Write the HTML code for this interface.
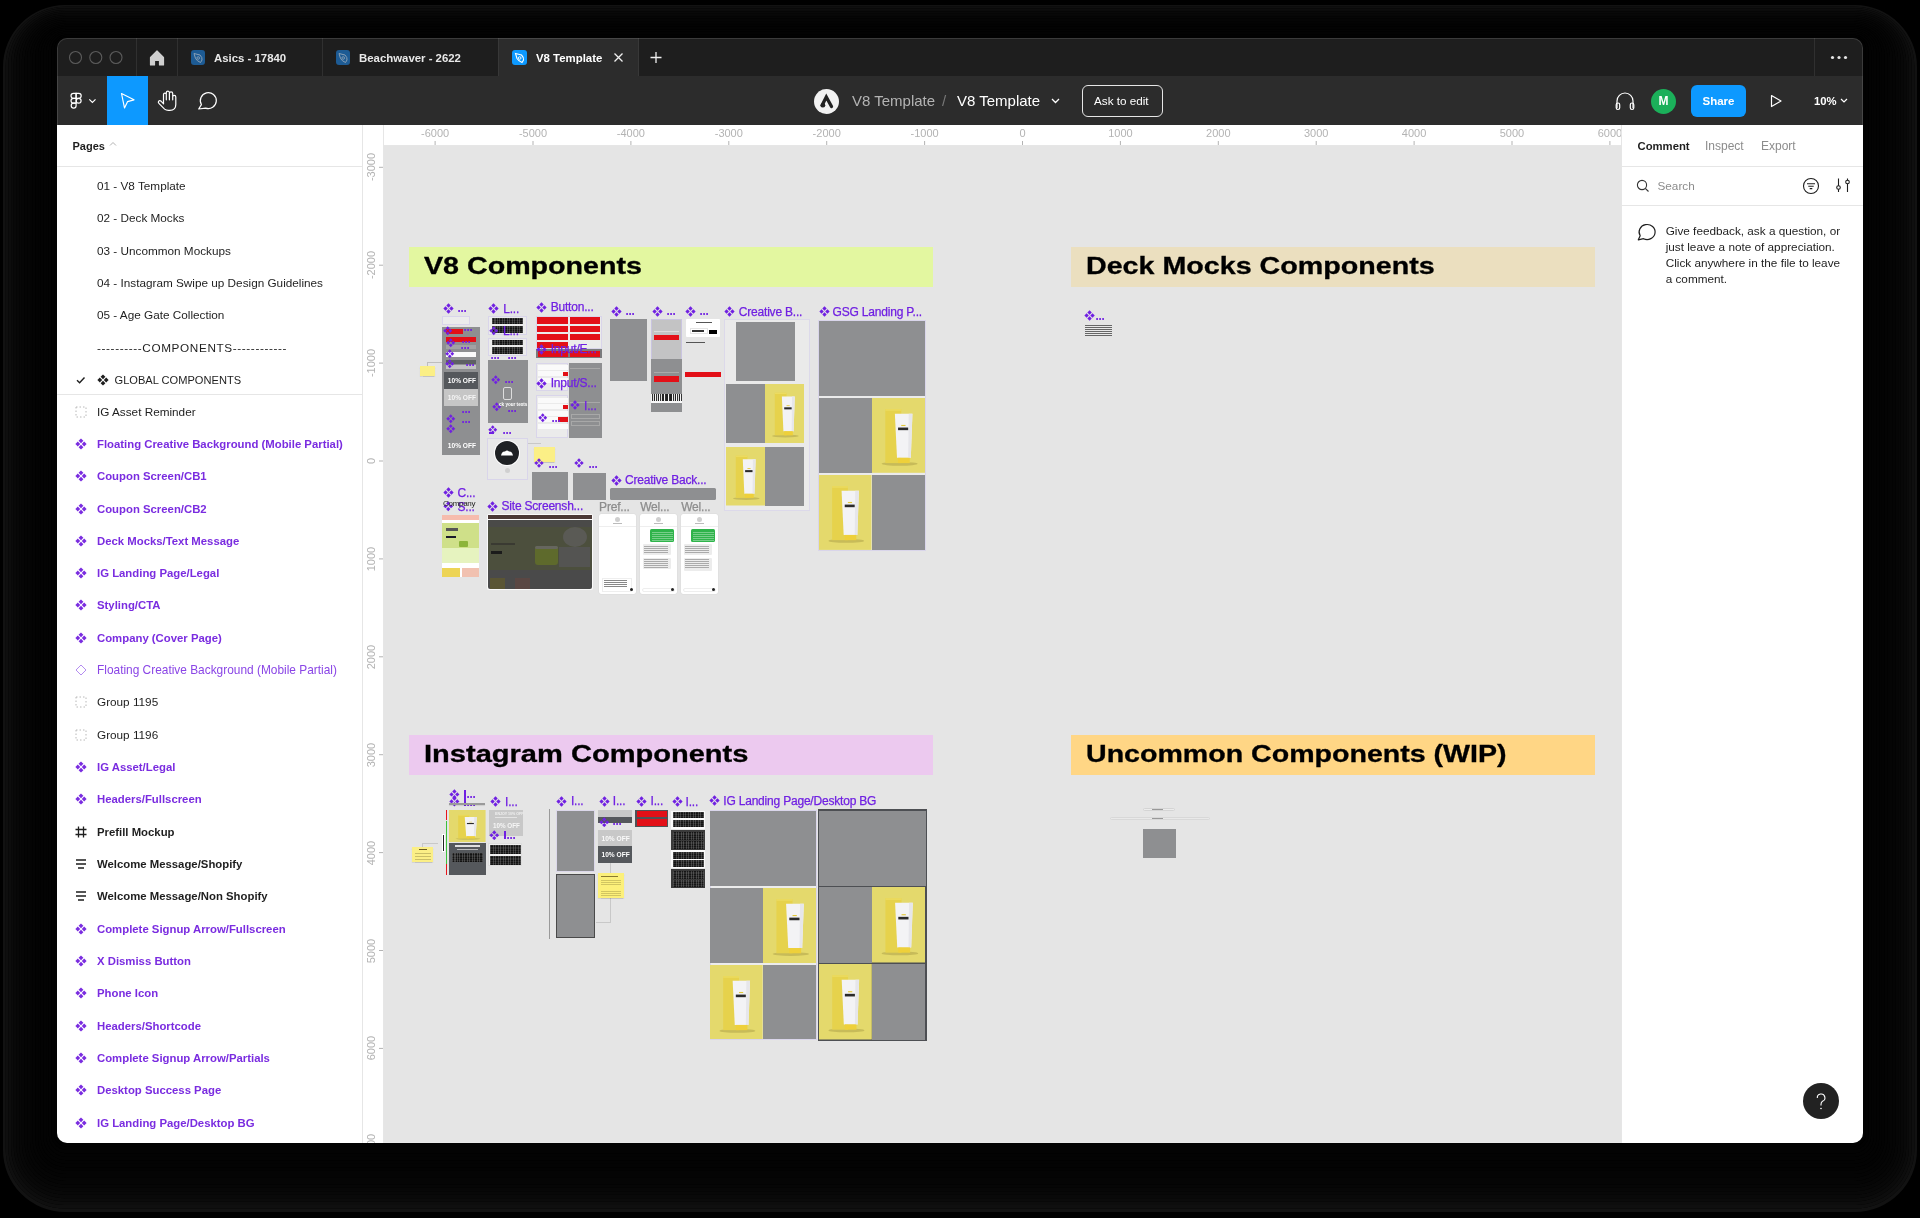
<!DOCTYPE html>
<html><head><meta charset="utf-8">
<style>
*{margin:0;padding:0;box-sizing:border-box}
html,body{width:1920px;height:1218px;overflow:hidden;background:#000;font-family:"Liberation Sans",sans-serif}
.a{position:absolute}
#win{position:absolute;left:0;top:0;width:1920px;height:1218px;clip-path:inset(38px 57px 75px 57px round 10px);will-change:transform}
.tt{position:absolute;color:#fff;font-size:12px;white-space:nowrap;line-height:14px}
.pg{position:absolute;left:97px;font-size:12px;color:#1e1e1e;white-space:nowrap;line-height:14px}
.ly{position:absolute;left:97px;font-size:11.35px;color:#7a2ce0;font-weight:bold;white-space:nowrap;line-height:14px}
.rl{position:absolute;font-size:10px;color:#b3b3b3;white-space:nowrap;line-height:12px}
</style></head>
<body>
<!-- SHADOW --><svg class="a" style="left:0;top:0" width="1920" height="1218"><path fill-rule="evenodd" fill="rgb(18,18,18)" d="M65.0 5.0 H1855.0 A62.0 62.0 0 0 1 1917.0 67.0 V1150.0 A62.0 62.0 0 0 1 1855.0 1212.0 H65.0 A62.0 62.0 0 0 1 3.0 1150.0 V67.0 A62.0 62.0 0 0 1 65.0 5.0 Z M65.1 6.7 H1854.9 A59.4 59.4 0 0 1 1914.3 66.0 V1149.1 A59.4 59.4 0 0 1 1854.9 1208.5 H65.1 A59.4 59.4 0 0 1 5.7 1149.1 V66.0 A59.4 59.4 0 0 1 65.1 6.7 Z"/><path fill-rule="evenodd" fill="rgb(15,15,15)" d="M65.1 6.7 H1854.9 A59.4 59.4 0 0 1 1914.3 66.0 V1149.1 A59.4 59.4 0 0 1 1854.9 1208.5 H65.1 A59.4 59.4 0 0 1 5.7 1149.1 V66.0 A59.4 59.4 0 0 1 65.1 6.7 Z M65.2 8.3 H1854.8 A56.8 56.8 0 0 1 1911.6 65.1 V1148.3 A56.8 56.8 0 0 1 1854.8 1205.1 H65.2 A56.8 56.8 0 0 1 8.4 1148.3 V65.1 A56.8 56.8 0 0 1 65.2 8.3 Z"/><path fill-rule="evenodd" fill="rgb(13,13,13)" d="M65.2 8.3 H1854.8 A56.8 56.8 0 0 1 1911.6 65.1 V1148.3 A56.8 56.8 0 0 1 1854.8 1205.1 H65.2 A56.8 56.8 0 0 1 8.4 1148.3 V65.1 A56.8 56.8 0 0 1 65.2 8.3 Z M65.3 9.9 H1854.7 A54.2 54.2 0 0 1 1908.9 64.2 V1147.5 A54.2 54.2 0 0 1 1854.7 1201.7 H65.3 A54.2 54.2 0 0 1 11.1 1147.5 V64.2 A54.2 54.2 0 0 1 65.3 9.9 Z"/><path fill-rule="evenodd" fill="rgb(11,11,11)" d="M65.3 9.9 H1854.7 A54.2 54.2 0 0 1 1908.9 64.2 V1147.5 A54.2 54.2 0 0 1 1854.7 1201.7 H65.3 A54.2 54.2 0 0 1 11.1 1147.5 V64.2 A54.2 54.2 0 0 1 65.3 9.9 Z M65.4 11.6 H1854.6 A51.6 51.6 0 0 1 1906.2 63.2 V1146.6 A51.6 51.6 0 0 1 1854.6 1198.2 H65.4 A51.6 51.6 0 0 1 13.8 1146.6 V63.2 A51.6 51.6 0 0 1 65.4 11.6 Z"/><path fill-rule="evenodd" fill="rgb(9,9,9)" d="M65.4 11.6 H1854.6 A51.6 51.6 0 0 1 1906.2 63.2 V1146.6 A51.6 51.6 0 0 1 1854.6 1198.2 H65.4 A51.6 51.6 0 0 1 13.8 1146.6 V63.2 A51.6 51.6 0 0 1 65.4 11.6 Z M65.5 13.2 H1854.5 A49.0 49.0 0 0 1 1903.5 62.2 V1145.8 A49.0 49.0 0 0 1 1854.5 1194.8 H65.5 A49.0 49.0 0 0 1 16.5 1145.8 V62.2 A49.0 49.0 0 0 1 65.5 13.2 Z"/><path fill-rule="evenodd" fill="rgb(8,8,8)" d="M65.5 13.2 H1854.5 A49.0 49.0 0 0 1 1903.5 62.2 V1145.8 A49.0 49.0 0 0 1 1854.5 1194.8 H65.5 A49.0 49.0 0 0 1 16.5 1145.8 V62.2 A49.0 49.0 0 0 1 65.5 13.2 Z M65.6 14.9 H1854.4 A46.4 46.4 0 0 1 1900.8 61.3 V1144.9 A46.4 46.4 0 0 1 1854.4 1191.3 H65.6 A46.4 46.4 0 0 1 19.2 1144.9 V61.3 A46.4 46.4 0 0 1 65.6 14.9 Z"/><path fill-rule="evenodd" fill="rgb(7,7,7)" d="M65.6 14.9 H1854.4 A46.4 46.4 0 0 1 1900.8 61.3 V1144.9 A46.4 46.4 0 0 1 1854.4 1191.3 H65.6 A46.4 46.4 0 0 1 19.2 1144.9 V61.3 A46.4 46.4 0 0 1 65.6 14.9 Z M65.7 16.5 H1854.3 A43.8 43.8 0 0 1 1898.1 60.3 V1144.0 A43.8 43.8 0 0 1 1854.3 1187.8 H65.7 A43.8 43.8 0 0 1 21.9 1144.0 V60.3 A43.8 43.8 0 0 1 65.7 16.5 Z"/><path fill-rule="evenodd" fill="rgb(6,6,6)" d="M65.7 16.5 H1854.3 A43.8 43.8 0 0 1 1898.1 60.3 V1144.0 A43.8 43.8 0 0 1 1854.3 1187.8 H65.7 A43.8 43.8 0 0 1 21.9 1144.0 V60.3 A43.8 43.8 0 0 1 65.7 16.5 Z M65.8 18.2 H1854.2 A41.2 41.2 0 0 1 1895.4 59.4 V1143.2 A41.2 41.2 0 0 1 1854.2 1184.4 H65.8 A41.2 41.2 0 0 1 24.6 1143.2 V59.4 A41.2 41.2 0 0 1 65.8 18.2 Z"/><path fill-rule="evenodd" fill="rgb(5,5,5)" d="M65.8 18.2 H1854.2 A41.2 41.2 0 0 1 1895.4 59.4 V1143.2 A41.2 41.2 0 0 1 1854.2 1184.4 H65.8 A41.2 41.2 0 0 1 24.6 1143.2 V59.4 A41.2 41.2 0 0 1 65.8 18.2 Z M65.9 19.9 H1854.1 A38.6 38.6 0 0 1 1892.7 58.4 V1142.4 A38.6 38.6 0 0 1 1854.1 1181.0 H65.9 A38.6 38.6 0 0 1 27.3 1142.4 V58.4 A38.6 38.6 0 0 1 65.9 19.9 Z"/><path fill-rule="evenodd" fill="rgb(5,5,5)" d="M65.9 19.9 H1854.1 A38.6 38.6 0 0 1 1892.7 58.4 V1142.4 A38.6 38.6 0 0 1 1854.1 1181.0 H65.9 A38.6 38.6 0 0 1 27.3 1142.4 V58.4 A38.6 38.6 0 0 1 65.9 19.9 Z M66.0 21.5 H1854.0 A36.0 36.0 0 0 1 1890.0 57.5 V1141.5 A36.0 36.0 0 0 1 1854.0 1177.5 H66.0 A36.0 36.0 0 0 1 30.0 1141.5 V57.5 A36.0 36.0 0 0 1 66.0 21.5 Z"/><path fill-rule="evenodd" fill="rgb(4,4,4)" d="M66.0 21.5 H1854.0 A36.0 36.0 0 0 1 1890.0 57.5 V1141.5 A36.0 36.0 0 0 1 1854.0 1177.5 H66.0 A36.0 36.0 0 0 1 30.0 1141.5 V57.5 A36.0 36.0 0 0 1 66.0 21.5 Z M66.1 23.2 H1853.9 A33.4 33.4 0 0 1 1887.3 56.5 V1140.6 A33.4 33.4 0 0 1 1853.9 1174.0 H66.1 A33.4 33.4 0 0 1 32.7 1140.6 V56.5 A33.4 33.4 0 0 1 66.1 23.2 Z"/><path fill-rule="evenodd" fill="rgb(4,4,4)" d="M66.1 23.2 H1853.9 A33.4 33.4 0 0 1 1887.3 56.5 V1140.6 A33.4 33.4 0 0 1 1853.9 1174.0 H66.1 A33.4 33.4 0 0 1 32.7 1140.6 V56.5 A33.4 33.4 0 0 1 66.1 23.2 Z M66.2 24.8 H1853.8 A30.8 30.8 0 0 1 1884.6 55.6 V1139.8 A30.8 30.8 0 0 1 1853.8 1170.6 H66.2 A30.8 30.8 0 0 1 35.4 1139.8 V55.6 A30.8 30.8 0 0 1 66.2 24.8 Z"/><path fill-rule="evenodd" fill="rgb(3,3,3)" d="M66.2 24.8 H1853.8 A30.8 30.8 0 0 1 1884.6 55.6 V1139.8 A30.8 30.8 0 0 1 1853.8 1170.6 H66.2 A30.8 30.8 0 0 1 35.4 1139.8 V55.6 A30.8 30.8 0 0 1 66.2 24.8 Z M66.3 26.4 H1853.7 A28.2 28.2 0 0 1 1881.9 54.6 V1139.0 A28.2 28.2 0 0 1 1853.7 1167.2 H66.3 A28.2 28.2 0 0 1 38.1 1139.0 V54.6 A28.2 28.2 0 0 1 66.3 26.4 Z"/><path fill-rule="evenodd" fill="rgb(3,3,3)" d="M66.3 26.4 H1853.7 A28.2 28.2 0 0 1 1881.9 54.6 V1139.0 A28.2 28.2 0 0 1 1853.7 1167.2 H66.3 A28.2 28.2 0 0 1 38.1 1139.0 V54.6 A28.2 28.2 0 0 1 66.3 26.4 Z M66.4 28.1 H1853.6 A25.6 25.6 0 0 1 1879.2 53.7 V1138.1 A25.6 25.6 0 0 1 1853.6 1163.7 H66.4 A25.6 25.6 0 0 1 40.8 1138.1 V53.7 A25.6 25.6 0 0 1 66.4 28.1 Z"/><path fill-rule="evenodd" fill="rgb(3,3,3)" d="M66.4 28.1 H1853.6 A25.6 25.6 0 0 1 1879.2 53.7 V1138.1 A25.6 25.6 0 0 1 1853.6 1163.7 H66.4 A25.6 25.6 0 0 1 40.8 1138.1 V53.7 A25.6 25.6 0 0 1 66.4 28.1 Z M66.5 29.8 H1853.5 A23.0 23.0 0 0 1 1876.5 52.8 V1137.2 A23.0 23.0 0 0 1 1853.5 1160.2 H66.5 A23.0 23.0 0 0 1 43.5 1137.2 V52.8 A23.0 23.0 0 0 1 66.5 29.8 Z"/><path fill-rule="evenodd" fill="rgb(3,3,3)" d="M66.5 29.8 H1853.5 A23.0 23.0 0 0 1 1876.5 52.8 V1137.2 A23.0 23.0 0 0 1 1853.5 1160.2 H66.5 A23.0 23.0 0 0 1 43.5 1137.2 V52.8 A23.0 23.0 0 0 1 66.5 29.8 Z M66.6 31.4 H1853.4 A20.4 20.4 0 0 1 1873.8 51.8 V1136.4 A20.4 20.4 0 0 1 1853.4 1156.8 H66.6 A20.4 20.4 0 0 1 46.2 1136.4 V51.8 A20.4 20.4 0 0 1 66.6 31.4 Z"/><path fill-rule="evenodd" fill="rgb(3,3,3)" d="M66.6 31.4 H1853.4 A20.4 20.4 0 0 1 1873.8 51.8 V1136.4 A20.4 20.4 0 0 1 1853.4 1156.8 H66.6 A20.4 20.4 0 0 1 46.2 1136.4 V51.8 A20.4 20.4 0 0 1 66.6 31.4 Z M66.7 33.0 H1853.3 A17.8 17.8 0 0 1 1871.1 50.9 V1135.5 A17.8 17.8 0 0 1 1853.3 1153.3 H66.7 A17.8 17.8 0 0 1 48.9 1135.5 V50.9 A17.8 17.8 0 0 1 66.7 33.0 Z"/><path fill-rule="evenodd" fill="rgb(3,3,3)" d="M66.7 33.0 H1853.3 A17.8 17.8 0 0 1 1871.1 50.9 V1135.5 A17.8 17.8 0 0 1 1853.3 1153.3 H66.7 A17.8 17.8 0 0 1 48.9 1135.5 V50.9 A17.8 17.8 0 0 1 66.7 33.0 Z M66.8 34.7 H1853.2 A15.2 15.2 0 0 1 1868.4 49.9 V1134.7 A15.2 15.2 0 0 1 1853.2 1149.9 H66.8 A15.2 15.2 0 0 1 51.6 1134.7 V49.9 A15.2 15.2 0 0 1 66.8 34.7 Z"/><path fill-rule="evenodd" fill="rgb(2,2,2)" d="M66.8 34.7 H1853.2 A15.2 15.2 0 0 1 1868.4 49.9 V1134.7 A15.2 15.2 0 0 1 1853.2 1149.9 H66.8 A15.2 15.2 0 0 1 51.6 1134.7 V49.9 A15.2 15.2 0 0 1 66.8 34.7 Z M66.9 36.3 H1853.1 A12.6 12.6 0 0 1 1865.7 48.9 V1133.9 A12.6 12.6 0 0 1 1853.1 1146.5 H66.9 A12.6 12.6 0 0 1 54.3 1133.9 V48.9 A12.6 12.6 0 0 1 66.9 36.3 Z"/><path fill-rule="evenodd" fill="rgb(2,2,2)" d="M66.9 36.3 H1853.1 A12.6 12.6 0 0 1 1865.7 48.9 V1133.9 A12.6 12.6 0 0 1 1853.1 1146.5 H66.9 A12.6 12.6 0 0 1 54.3 1133.9 V48.9 A12.6 12.6 0 0 1 66.9 36.3 Z M67.0 38.0 H1853.0 A10.0 10.0 0 0 1 1863.0 48.0 V1133.0 A10.0 10.0 0 0 1 1853.0 1143.0 H67.0 A10.0 10.0 0 0 1 57.0 1133.0 V48.0 A10.0 10.0 0 0 1 67.0 38.0 Z"/></svg><!-- /SHADOW -->
<div id="win">
  <!-- tab bar -->
  <div class="a" style="left:57px;top:38px;width:1806px;height:38px;background:#1e1e1e"></div>
  <!-- toolbar -->
  <div class="a" style="left:57px;top:76px;width:1806px;height:49px;background:#2c2c2c"></div>

  <!-- tab bar content -->
  <svg class="a" style="left:57px;top:38px" width="1806" height="38">
    <circle cx="18.5" cy="19.5" r="6" fill="none" stroke="#5b5b5b" stroke-width="1.1"/>
    <circle cx="38.8" cy="19.5" r="6" fill="none" stroke="#5b5b5b" stroke-width="1.1"/>
    <circle cx="59" cy="19.5" r="6" fill="none" stroke="#5b5b5b" stroke-width="1.1"/>
    <line x1="79.5" y1="0" x2="79.5" y2="38" stroke="#303030" stroke-width="1"/>
    <line x1="120.5" y1="0" x2="120.5" y2="38" stroke="#303030" stroke-width="1"/>
    <line x1="265.5" y1="0" x2="265.5" y2="38" stroke="#303030" stroke-width="1"/>
    <line x1="1757.5" y1="0" x2="1757.5" y2="38" stroke="#303030" stroke-width="1"/>
    <path d="M93.5 19.5 L100 13 L106.5 19.5 L106.5 27 L102.5 27 L102.5 22.5 L97.5 22.5 L97.5 27 L93.5 27 Z" fill="#cfcfcf" stroke="#cfcfcf" stroke-width="1.2" stroke-linejoin="round"/>
    <circle cx="1775.5" cy="19.5" r="1.6" fill="#e6e6e6"/>
    <circle cx="1782" cy="19.5" r="1.6" fill="#e6e6e6"/>
    <circle cx="1788.5" cy="19.5" r="1.6" fill="#e6e6e6"/>
  </svg>
  <div class="a" style="left:498px;top:38px;width:141px;height:38px;background:#2c2c2c;border-left:1px solid #383838;border-right:1px solid #383838"></div>
  <div class="a" style="left:191px;top:50px;width:14px;height:15px;background:#1d5b94;border-radius:3px"></div>
  <div class="a" style="left:336px;top:50px;width:14px;height:15px;background:#1d5b94;border-radius:3px"></div>
  <div class="a" style="left:512px;top:50px;width:15px;height:15px;background:#0d99ff;border-radius:3px"></div>
  <svg class="a" style="left:191px;top:50px" width="14" height="15" viewBox="0 0 14 15"><path d="M3 3.5 L9 5 Q11.5 7.5 11 10 L9.5 12.5 Q6 11 4.5 8.5 Z" fill="none" stroke="#8aa0b5" stroke-width="1"/><circle cx="7.2" cy="8" r="1.3" fill="none" stroke="#8aa0b5" stroke-width="0.9"/></svg>
  <svg class="a" style="left:336px;top:50px" width="14" height="15" viewBox="0 0 14 15"><path d="M3 3.5 L9 5 Q11.5 7.5 11 10 L9.5 12.5 Q6 11 4.5 8.5 Z" fill="none" stroke="#8aa0b5" stroke-width="1"/><circle cx="7.2" cy="8" r="1.3" fill="none" stroke="#8aa0b5" stroke-width="0.9"/></svg>
  <svg class="a" style="left:512px;top:50px" width="15" height="15" viewBox="0 0 14 15"><path d="M3 3.5 L9 5 Q11.5 7.5 11 10 L9.5 12.5 Q6 11 4.5 8.5 Z" fill="none" stroke="#fff" stroke-width="1.1"/><circle cx="7.2" cy="8" r="1.3" fill="none" stroke="#fff" stroke-width="0.9"/></svg>
  <div class="tt" style="left:214px;top:50.5px;font-weight:bold;font-size:11.4px;color:#e8e8e8">Asics - 17840</div>
  <div class="tt" style="left:359px;top:50.5px;font-weight:bold;font-size:11.4px;color:#e8e8e8">Beachwaver - 2622</div>
  <div class="tt" style="left:536px;top:50.5px;font-weight:bold;font-size:11.4px;color:#fff">V8 Template</div>
  <svg class="a" style="left:612px;top:51px" width="13" height="13"><path d="M2.5 2.5 L10.5 10.5 M10.5 2.5 L2.5 10.5" stroke="#f0f0f0" stroke-width="1.3"/></svg>
  <svg class="a" style="left:649px;top:50px" width="14" height="15"><path d="M7 2 V13 M1.5 7.5 H12.5" stroke="#f0f0f0" stroke-width="1.3"/></svg>

  <!-- toolbar content -->
  <div class="a" style="left:107px;top:76px;width:41px;height:49px;background:#0d99ff"></div>
  <svg class="a" style="left:57px;top:76px" width="200" height="49">
    <!-- figma logo -->
    <g fill="none" stroke="#fff" stroke-width="1.2">
      <path d="M16.45 17.4 H19.1 V22.3 H16.45 A2.45 2.45 0 0 1 16.45 17.4 Z"/>
      <path d="M19.1 17.4 H21.75 A2.45 2.45 0 0 1 21.75 22.3 H19.1 Z"/>
      <path d="M16.45 22.3 H19.1 V27.2 H16.45 A2.45 2.45 0 0 1 16.45 22.3 Z"/>
      <circle cx="21.65" cy="24.75" r="2.45"/>
      <path d="M16.45 27.2 H19.1 V29.65 A2.45 2.45 0 1 1 16.45 27.2 Z"/>
    </g>
    <path d="M32.3 23.4 L35.4 26.4 L38.5 23.4" fill="none" stroke="#fff" stroke-width="1.2"/>
    <!-- select arrow -->
    <path d="M64.5 17.5 L77 23.8 L70.5 25.7 L67.5 32 Z" fill="none" stroke="#fff" stroke-width="1.2" stroke-linejoin="round"/>
    <!-- hand -->
    <path d="M106.6 27.8 L104.2 25.3 Q102.8 24.1 101.7 25.2 Q100.8 26.3 101.9 27.4 L107.6 33.1 Q109 34.4 111.5 34.4 H112.8 Q118.8 34.4 118.8 28.5 V20.9 A1.55 1.55 0 0 0 115.7 20.9 V23.8 M115.7 23.8 V17.6 A1.65 1.65 0 0 0 112.4 17.6 V23.8 M112.4 23.8 V16.7 A1.55 1.55 0 0 0 109.3 16.7 V23.8 M109.3 23.8 V18.5 A1.4 1.4 0 0 0 106.5 18.5 V27.8" fill="none" stroke="#fff" stroke-width="1.2" stroke-linejoin="round" stroke-linecap="round"/>
    <!-- comment -->
    <path d="M144.4 28.6 L141.7 33 L148.56 32.1 A8 8 0 1 0 144.4 28.6 Z" fill="none" stroke="#fff" stroke-width="1.2" stroke-linejoin="round"/>
  </svg>
  <!-- center -->
  <div class="a" style="left:813.5px;top:88.5px;width:25px;height:25px;border-radius:50%;background:#f2f2f2"></div>
  <svg class="a" style="left:813.5px;top:88.5px" width="25" height="25"><path d="M8 16.5 L12.3 8 L17.5 17.5" fill="none" stroke="#222" stroke-width="3.3" stroke-linecap="round"/><circle cx="9" cy="16.3" r="2.3" fill="#222"/></svg>
  <div class="tt" style="left:852px;top:92px;font-size:15px;line-height:18px;color:#b3b3b3">V8 Template</div>
  <div class="tt" style="left:942px;top:92px;font-size:15px;line-height:18px;color:#777">/</div>
  <div class="tt" style="left:957px;top:92px;font-size:15px;line-height:18px;color:#fff">V8 Template</div>
  <svg class="a" style="left:1050px;top:96px" width="11" height="10"><path d="M2 3 L5.5 6.5 L9 3" fill="none" stroke="#fff" stroke-width="1.3"/></svg>
  <div class="a" style="left:1082px;top:85px;width:81px;height:32px;border:1.3px solid #e6e6e6;border-radius:6px"></div>
  <div class="tt" style="left:1094px;top:94px;font-size:11.7px;color:#fff">Ask to edit</div>
  <!-- right -->
  <svg class="a" style="left:1612px;top:88px" width="26" height="26"><path d="M5 20 V13 A8 8 0 0 1 21 13 V20" fill="none" stroke="#fff" stroke-width="1.2"/><rect x="4.2" y="15" width="3.5" height="6.5" rx="1.7" fill="none" stroke="#fff" stroke-width="1.2"/><rect x="18.3" y="15" width="3.5" height="6.5" rx="1.7" fill="none" stroke="#fff" stroke-width="1.2"/></svg>
  <div class="a" style="left:1651px;top:88.5px;width:25px;height:25px;border-radius:50%;background:#1bb05a"></div>
  <div class="tt" style="left:1651px;top:94px;width:25px;text-align:center;font-size:12px;font-weight:bold;color:#fff">M</div>
  <div class="a" style="left:1691px;top:84.5px;width:55px;height:32.5px;border-radius:6px;background:#0d99ff"></div>
  <div class="tt" style="left:1691px;top:94px;width:55px;text-align:center;font-size:11.5px;font-weight:bold;color:#fff">Share</div>
  <svg class="a" style="left:1766px;top:91px" width="20" height="20"><path d="M5.5 4.5 L15 10 L5.5 15.5 Z" fill="none" stroke="#fff" stroke-width="1.2" stroke-linejoin="round"/></svg>
  <div class="tt" style="left:1814px;top:94px;font-size:11.3px;font-weight:bold;color:#fff">10%</div>
  <svg class="a" style="left:1839px;top:96px" width="11" height="10"><path d="M2 3 L5 6 L8 3" fill="none" stroke="#fff" stroke-width="1.2"/></svg>
  <!-- left panel -->
  <div class="a" style="left:57px;top:125px;width:306px;height:1018px;background:#fff;border-right:1px solid #e6e6e6"></div>
  <!-- left content -->
  <div class="tt" style="left:72.5px;top:138.5px;font-size:11px;font-weight:bold;color:#1e1e1e">Pages</div>
  <svg class="a" style="left:108px;top:140px" width="10" height="8"><path d="M2 5.5 L5 2.5 L8 5.5" fill="none" stroke="#b3b3b3" stroke-width="1"/></svg>
  <div class="a" style="left:57px;top:165.5px;width:306px;height:1px;background:#e6e6e6"></div>
  <div class="pg" style="top:179.0px;font-size:11.75px">01 - V8 Template</div>
  <div class="pg" style="top:211.3px;font-size:11.75px">02 - Deck Mocks</div>
  <div class="pg" style="top:243.6px;font-size:11.75px">03 - Uncommon Mockups</div>
  <div class="pg" style="top:276.0px;font-size:11.75px">04 - Instagram Swipe up Design Guidelines</div>
  <div class="pg" style="top:308.3px;font-size:11.75px">05 - Age Gate Collection</div>
  <div class="pg" style="top:340.6px;font-size:11.75px;letter-spacing:0.62px">----------COMPONENTS------------</div>
  <svg class="a" style="left:75px;top:373.9px" width="12" height="12"><path d="M2 6.3 L4.6 8.8 L9.5 3.5" fill="none" stroke="#1e1e1e" stroke-width="1.4"/></svg>
  <svg class="a" style="left:96.5px;top:373.9px" width="12" height="12" viewBox="0 0 12 12"><g fill="#1e1e1e"><path d="M6 0.4 L8.4 2.8 L6 5.2 L3.6 2.8Z"/><path d="M6 6.8 L8.4 9.2 L6 11.6 L3.6 9.2Z"/><path d="M0.4 6 L2.8 3.6 L5.2 6 L2.8 8.4Z"/><path d="M6.8 6 L9.2 3.6 L11.6 6 L9.2 8.4Z"/></g></svg>
  <div class="pg" style="left:114.5px;top:372.9px;font-size:11.1px">GLOBAL COMPONENTS</div>
  <div class="a" style="left:57px;top:394px;width:306px;height:1px;background:#e6e6e6"></div>
  <svg class="a" style="left:75px;top:405.5px" width="12" height="12"><rect x="1" y="1" width="10" height="10" fill="none" stroke="#b8b8b8" stroke-width="1" stroke-dasharray="1.5 2"/></svg>
  <div class="pg" style="top:404.5px;font-size:11.75px">IG Asset Reminder</div>
  <svg class="a" style="left:74.5px;top:437.8px" width="12" height="12" viewBox="0 0 12 12"><g fill="#7a2ce0"><path d="M6 0.4 L8.4 2.8 L6 5.2 L3.6 2.8Z"/><path d="M6 6.8 L8.4 9.2 L6 11.6 L3.6 9.2Z"/><path d="M0.4 6 L2.8 3.6 L5.2 6 L2.8 8.4Z"/><path d="M6.8 6 L9.2 3.6 L11.6 6 L9.2 8.4Z"/></g></svg>
  <div class="ly" style="top:436.8px">Floating Creative Background (Mobile Partial)</div>
  <svg class="a" style="left:74.5px;top:470.1px" width="12" height="12" viewBox="0 0 12 12"><g fill="#7a2ce0"><path d="M6 0.4 L8.4 2.8 L6 5.2 L3.6 2.8Z"/><path d="M6 6.8 L8.4 9.2 L6 11.6 L3.6 9.2Z"/><path d="M0.4 6 L2.8 3.6 L5.2 6 L2.8 8.4Z"/><path d="M6.8 6 L9.2 3.6 L11.6 6 L9.2 8.4Z"/></g></svg>
  <div class="ly" style="top:469.1px">Coupon Screen/CB1</div>
  <svg class="a" style="left:74.5px;top:502.5px" width="12" height="12" viewBox="0 0 12 12"><g fill="#7a2ce0"><path d="M6 0.4 L8.4 2.8 L6 5.2 L3.6 2.8Z"/><path d="M6 6.8 L8.4 9.2 L6 11.6 L3.6 9.2Z"/><path d="M0.4 6 L2.8 3.6 L5.2 6 L2.8 8.4Z"/><path d="M6.8 6 L9.2 3.6 L11.6 6 L9.2 8.4Z"/></g></svg>
  <div class="ly" style="top:501.5px">Coupon Screen/CB2</div>
  <svg class="a" style="left:74.5px;top:534.8px" width="12" height="12" viewBox="0 0 12 12"><g fill="#7a2ce0"><path d="M6 0.4 L8.4 2.8 L6 5.2 L3.6 2.8Z"/><path d="M6 6.8 L8.4 9.2 L6 11.6 L3.6 9.2Z"/><path d="M0.4 6 L2.8 3.6 L5.2 6 L2.8 8.4Z"/><path d="M6.8 6 L9.2 3.6 L11.6 6 L9.2 8.4Z"/></g></svg>
  <div class="ly" style="top:533.8px">Deck Mocks/Text Message</div>
  <svg class="a" style="left:74.5px;top:567.1px" width="12" height="12" viewBox="0 0 12 12"><g fill="#7a2ce0"><path d="M6 0.4 L8.4 2.8 L6 5.2 L3.6 2.8Z"/><path d="M6 6.8 L8.4 9.2 L6 11.6 L3.6 9.2Z"/><path d="M0.4 6 L2.8 3.6 L5.2 6 L2.8 8.4Z"/><path d="M6.8 6 L9.2 3.6 L11.6 6 L9.2 8.4Z"/></g></svg>
  <div class="ly" style="top:566.1px">IG Landing Page/Legal</div>
  <svg class="a" style="left:74.5px;top:599.4px" width="12" height="12" viewBox="0 0 12 12"><g fill="#7a2ce0"><path d="M6 0.4 L8.4 2.8 L6 5.2 L3.6 2.8Z"/><path d="M6 6.8 L8.4 9.2 L6 11.6 L3.6 9.2Z"/><path d="M0.4 6 L2.8 3.6 L5.2 6 L2.8 8.4Z"/><path d="M6.8 6 L9.2 3.6 L11.6 6 L9.2 8.4Z"/></g></svg>
  <div class="ly" style="top:598.4px">Styling/CTA</div>
  <svg class="a" style="left:74.5px;top:631.7px" width="12" height="12" viewBox="0 0 12 12"><g fill="#7a2ce0"><path d="M6 0.4 L8.4 2.8 L6 5.2 L3.6 2.8Z"/><path d="M6 6.8 L8.4 9.2 L6 11.6 L3.6 9.2Z"/><path d="M0.4 6 L2.8 3.6 L5.2 6 L2.8 8.4Z"/><path d="M6.8 6 L9.2 3.6 L11.6 6 L9.2 8.4Z"/></g></svg>
  <div class="ly" style="top:630.7px">Company (Cover Page)</div>
  <svg class="a" style="left:74.5px;top:664.1px" width="12" height="12"><path d="M6 1 L11 6 L6 11 L1 6 Z" fill="none" stroke="#b48cf0" stroke-width="1"/></svg>
  <div class="pg" style="top:663.1px;font-size:11.9px;color:#8a45e6">Floating Creative Background (Mobile Partial)</div>
  <svg class="a" style="left:75px;top:696.4px" width="12" height="12"><rect x="1" y="1" width="10" height="10" fill="none" stroke="#b8b8b8" stroke-width="1" stroke-dasharray="1.5 2"/></svg>
  <div class="pg" style="top:695.4px;font-size:11.75px">Group 1195</div>
  <svg class="a" style="left:75px;top:728.7px" width="12" height="12"><rect x="1" y="1" width="10" height="10" fill="none" stroke="#b8b8b8" stroke-width="1" stroke-dasharray="1.5 2"/></svg>
  <div class="pg" style="top:727.7px;font-size:11.75px">Group 1196</div>
  <svg class="a" style="left:74.5px;top:761.0px" width="12" height="12" viewBox="0 0 12 12"><g fill="#7a2ce0"><path d="M6 0.4 L8.4 2.8 L6 5.2 L3.6 2.8Z"/><path d="M6 6.8 L8.4 9.2 L6 11.6 L3.6 9.2Z"/><path d="M0.4 6 L2.8 3.6 L5.2 6 L2.8 8.4Z"/><path d="M6.8 6 L9.2 3.6 L11.6 6 L9.2 8.4Z"/></g></svg>
  <div class="ly" style="top:760.0px">IG Asset/Legal</div>
  <svg class="a" style="left:74.5px;top:793.3px" width="12" height="12" viewBox="0 0 12 12"><g fill="#7a2ce0"><path d="M6 0.4 L8.4 2.8 L6 5.2 L3.6 2.8Z"/><path d="M6 6.8 L8.4 9.2 L6 11.6 L3.6 9.2Z"/><path d="M0.4 6 L2.8 3.6 L5.2 6 L2.8 8.4Z"/><path d="M6.8 6 L9.2 3.6 L11.6 6 L9.2 8.4Z"/></g></svg>
  <div class="ly" style="top:792.3px">Headers/Fullscreen</div>
  <svg class="a" style="left:74.5px;top:825.7px" width="12" height="12"><path d="M3.5 0.5 V11.5 M8.5 0.5 V11.5 M0.5 3.5 H11.5 M0.5 8.5 H11.5" fill="none" stroke="#1e1e1e" stroke-width="1.3"/></svg>
  <div class="ly" style="top:824.7px;color:#1e1e1e">Prefill Mockup</div>
  <svg class="a" style="left:74.5px;top:858.0px" width="12" height="12"><path d="M1 2 H11 M1 6 H11 M3 10 H9" fill="none" stroke="#1e1e1e" stroke-width="1.5"/></svg>
  <div class="ly" style="top:857.0px;color:#1e1e1e">Welcome Message/Shopify</div>
  <svg class="a" style="left:74.5px;top:890.3px" width="12" height="12"><path d="M1 2 H11 M1 6 H11 M3 10 H9" fill="none" stroke="#1e1e1e" stroke-width="1.5"/></svg>
  <div class="ly" style="top:889.3px;color:#1e1e1e">Welcome Message/Non Shopify</div>
  <svg class="a" style="left:74.5px;top:922.6px" width="12" height="12" viewBox="0 0 12 12"><g fill="#7a2ce0"><path d="M6 0.4 L8.4 2.8 L6 5.2 L3.6 2.8Z"/><path d="M6 6.8 L8.4 9.2 L6 11.6 L3.6 9.2Z"/><path d="M0.4 6 L2.8 3.6 L5.2 6 L2.8 8.4Z"/><path d="M6.8 6 L9.2 3.6 L11.6 6 L9.2 8.4Z"/></g></svg>
  <div class="ly" style="top:921.6px">Complete Signup Arrow/Fullscreen</div>
  <svg class="a" style="left:74.5px;top:954.9px" width="12" height="12" viewBox="0 0 12 12"><g fill="#7a2ce0"><path d="M6 0.4 L8.4 2.8 L6 5.2 L3.6 2.8Z"/><path d="M6 6.8 L8.4 9.2 L6 11.6 L3.6 9.2Z"/><path d="M0.4 6 L2.8 3.6 L5.2 6 L2.8 8.4Z"/><path d="M6.8 6 L9.2 3.6 L11.6 6 L9.2 8.4Z"/></g></svg>
  <div class="ly" style="top:953.9px">X Dismiss Button</div>
  <svg class="a" style="left:74.5px;top:987.3px" width="12" height="12" viewBox="0 0 12 12"><g fill="#7a2ce0"><path d="M6 0.4 L8.4 2.8 L6 5.2 L3.6 2.8Z"/><path d="M6 6.8 L8.4 9.2 L6 11.6 L3.6 9.2Z"/><path d="M0.4 6 L2.8 3.6 L5.2 6 L2.8 8.4Z"/><path d="M6.8 6 L9.2 3.6 L11.6 6 L9.2 8.4Z"/></g></svg>
  <div class="ly" style="top:986.3px">Phone Icon</div>
  <svg class="a" style="left:74.5px;top:1019.5999999999999px" width="12" height="12" viewBox="0 0 12 12"><g fill="#7a2ce0"><path d="M6 0.4 L8.4 2.8 L6 5.2 L3.6 2.8Z"/><path d="M6 6.8 L8.4 9.2 L6 11.6 L3.6 9.2Z"/><path d="M0.4 6 L2.8 3.6 L5.2 6 L2.8 8.4Z"/><path d="M6.8 6 L9.2 3.6 L11.6 6 L9.2 8.4Z"/></g></svg>
  <div class="ly" style="top:1018.6px">Headers/Shortcode</div>
  <svg class="a" style="left:74.5px;top:1051.9px" width="12" height="12" viewBox="0 0 12 12"><g fill="#7a2ce0"><path d="M6 0.4 L8.4 2.8 L6 5.2 L3.6 2.8Z"/><path d="M6 6.8 L8.4 9.2 L6 11.6 L3.6 9.2Z"/><path d="M0.4 6 L2.8 3.6 L5.2 6 L2.8 8.4Z"/><path d="M6.8 6 L9.2 3.6 L11.6 6 L9.2 8.4Z"/></g></svg>
  <div class="ly" style="top:1050.9px">Complete Signup Arrow/Partials</div>
  <svg class="a" style="left:74.5px;top:1084.2px" width="12" height="12" viewBox="0 0 12 12"><g fill="#7a2ce0"><path d="M6 0.4 L8.4 2.8 L6 5.2 L3.6 2.8Z"/><path d="M6 6.8 L8.4 9.2 L6 11.6 L3.6 9.2Z"/><path d="M0.4 6 L2.8 3.6 L5.2 6 L2.8 8.4Z"/><path d="M6.8 6 L9.2 3.6 L11.6 6 L9.2 8.4Z"/></g></svg>
  <div class="ly" style="top:1083.2px">Desktop Success Page</div>
  <svg class="a" style="left:74.5px;top:1116.5px" width="12" height="12" viewBox="0 0 12 12"><g fill="#7a2ce0"><path d="M6 0.4 L8.4 2.8 L6 5.2 L3.6 2.8Z"/><path d="M6 6.8 L8.4 9.2 L6 11.6 L3.6 9.2Z"/><path d="M0.4 6 L2.8 3.6 L5.2 6 L2.8 8.4Z"/><path d="M6.8 6 L9.2 3.6 L11.6 6 L9.2 8.4Z"/></g></svg>
  <div class="ly" style="top:1115.5px">IG Landing Page/Desktop BG</div>
  <!-- rulers -->
  <div class="a" style="left:363px;top:125px;width:1258px;height:21px;background:#fff;border-bottom:1px solid #e6e6e6"></div>
  <div class="a" style="left:363px;top:125px;width:21px;height:1018px;background:#fff;border-right:1px solid #e6e6e6"></div>
  <!-- ruler content -->
  <div class="rl" style="left:405.1px;top:126.5px;width:60px;text-align:center;font-size:11px">-6000</div>
  <div class="rl" style="left:503.0px;top:126.5px;width:60px;text-align:center;font-size:11px">-5000</div>
  <div class="rl" style="left:600.9px;top:126.5px;width:60px;text-align:center;font-size:11px">-4000</div>
  <div class="rl" style="left:698.8px;top:126.5px;width:60px;text-align:center;font-size:11px">-3000</div>
  <div class="rl" style="left:796.7px;top:126.5px;width:60px;text-align:center;font-size:11px">-2000</div>
  <div class="rl" style="left:894.6px;top:126.5px;width:60px;text-align:center;font-size:11px">-1000</div>
  <div class="rl" style="left:992.5px;top:126.5px;width:60px;text-align:center;font-size:11px">0</div>
  <div class="rl" style="left:1090.4px;top:126.5px;width:60px;text-align:center;font-size:11px">1000</div>
  <div class="rl" style="left:1188.3px;top:126.5px;width:60px;text-align:center;font-size:11px">2000</div>
  <div class="rl" style="left:1286.2px;top:126.5px;width:60px;text-align:center;font-size:11px">3000</div>
  <div class="rl" style="left:1384.1px;top:126.5px;width:60px;text-align:center;font-size:11px">4000</div>
  <div class="rl" style="left:1482.0px;top:126.5px;width:60px;text-align:center;font-size:11px">5000</div>
  <div class="rl" style="left:1579.9px;top:126.5px;width:60px;text-align:center;font-size:11px">6000</div>
  <div class="rl" style="left:341px;top:161.3px;width:60px;text-align:center;font-size:11px;transform:rotate(-90deg)">-3000</div>
  <div class="rl" style="left:341px;top:259.2px;width:60px;text-align:center;font-size:11px;transform:rotate(-90deg)">-2000</div>
  <div class="rl" style="left:341px;top:357.1px;width:60px;text-align:center;font-size:11px;transform:rotate(-90deg)">-1000</div>
  <div class="rl" style="left:341px;top:455.0px;width:60px;text-align:center;font-size:11px;transform:rotate(-90deg)">0</div>
  <div class="rl" style="left:341px;top:552.9px;width:60px;text-align:center;font-size:11px;transform:rotate(-90deg)">1000</div>
  <div class="rl" style="left:341px;top:650.8px;width:60px;text-align:center;font-size:11px;transform:rotate(-90deg)">2000</div>
  <div class="rl" style="left:341px;top:748.7px;width:60px;text-align:center;font-size:11px;transform:rotate(-90deg)">3000</div>
  <div class="rl" style="left:341px;top:846.6px;width:60px;text-align:center;font-size:11px;transform:rotate(-90deg)">4000</div>
  <div class="rl" style="left:341px;top:944.5px;width:60px;text-align:center;font-size:11px;transform:rotate(-90deg)">5000</div>
  <div class="rl" style="left:341px;top:1042.4px;width:60px;text-align:center;font-size:11px;transform:rotate(-90deg)">6000</div>
  <div class="rl" style="left:341px;top:1140.3px;width:60px;text-align:center;font-size:11px;transform:rotate(-90deg)">7000</div>
  <svg class="a" style="left:0;top:0;pointer-events:none" width="1920" height="1218"><rect x="434.6" y="141" width="1" height="4" fill="#b3b3b3"/><rect x="532.5" y="141" width="1" height="4" fill="#b3b3b3"/><rect x="630.4" y="141" width="1" height="4" fill="#b3b3b3"/><rect x="728.3" y="141" width="1" height="4" fill="#b3b3b3"/><rect x="826.2" y="141" width="1" height="4" fill="#b3b3b3"/><rect x="924.1" y="141" width="1" height="4" fill="#b3b3b3"/><rect x="1022.0" y="141" width="1" height="4" fill="#b3b3b3"/><rect x="1119.9" y="141" width="1" height="4" fill="#b3b3b3"/><rect x="1217.8" y="141" width="1" height="4" fill="#b3b3b3"/><rect x="1315.7" y="141" width="1" height="4" fill="#b3b3b3"/><rect x="1413.6" y="141" width="1" height="4" fill="#b3b3b3"/><rect x="1511.5" y="141" width="1" height="4" fill="#b3b3b3"/><rect x="1609.4" y="141" width="1" height="4" fill="#b3b3b3"/><rect x="379" y="166.8" width="4" height="1" fill="#b3b3b3"/><rect x="379" y="264.7" width="4" height="1" fill="#b3b3b3"/><rect x="379" y="362.6" width="4" height="1" fill="#b3b3b3"/><rect x="379" y="460.5" width="4" height="1" fill="#b3b3b3"/><rect x="379" y="558.4" width="4" height="1" fill="#b3b3b3"/><rect x="379" y="656.3" width="4" height="1" fill="#b3b3b3"/><rect x="379" y="754.2" width="4" height="1" fill="#b3b3b3"/><rect x="379" y="852.1" width="4" height="1" fill="#b3b3b3"/><rect x="379" y="950.0" width="4" height="1" fill="#b3b3b3"/><rect x="379" y="1047.9" width="4" height="1" fill="#b3b3b3"/><rect x="379" y="1145.8" width="4" height="1" fill="#b3b3b3"/></svg>
  <!-- canvas -->
  <div class="a" style="left:384px;top:146px;width:1237px;height:997px;background:#e5e5e5"></div>
  <!-- right panel -->
  <!-- CANVAS START -->
  <div class="a" style="left:408.7px;top:247.0px;width:524.8px;height:40.0px;background:#e3f7a0;"></div>
  <div class="a" style="left:424.0px;top:249.8px;font-size:23px;line-height:32px;font-weight:bold;color:#000;white-space:nowrap;transform:scaleX(1.245);transform-origin:0 0;-webkit-text-stroke:0.3px #000">V8 Components</div>
  <div class="a" style="left:1071.0px;top:247.0px;width:524.2px;height:40.0px;background:#ebdfbf;"></div>
  <div class="a" style="left:1086.3px;top:249.8px;font-size:23px;line-height:32px;font-weight:bold;color:#000;white-space:nowrap;transform:scaleX(1.2455);transform-origin:0 0;-webkit-text-stroke:0.3px #000">Deck Mocks Components</div>
  <div class="a" style="left:408.7px;top:734.8px;width:524.8px;height:40.0px;background:#ecc9ef;"></div>
  <div class="a" style="left:424.0px;top:737.6px;font-size:23px;line-height:32px;font-weight:bold;color:#000;white-space:nowrap;transform:scaleX(1.263);transform-origin:0 0;-webkit-text-stroke:0.3px #000">Instagram Components</div>
  <div class="a" style="left:1071.0px;top:735.0px;width:524.2px;height:40.0px;background:#ffd685;"></div>
  <div class="a" style="left:1086.3px;top:737.8px;font-size:23px;line-height:32px;font-weight:bold;color:#000;white-space:nowrap;transform:scaleX(1.242);transform-origin:0 0;-webkit-text-stroke:0.3px #000">Uncommon Components (WIP)</div>
  <svg class="a" style="left:443.0px;top:302.5px" width="11.0" height="11.0" viewBox="0 0 12 12"><g fill="#7020e2"><path d="M6 0.4 L8.4 2.8 L6 5.2 L3.6 2.8Z"/><path d="M6 6.8 L8.4 9.2 L6 11.6 L3.6 9.2Z"/><path d="M0.4 6 L2.8 3.6 L5.2 6 L2.8 8.4Z"/><path d="M6.8 6 L9.2 3.6 L11.6 6 L9.2 8.4Z"/></g></svg>
  <svg class="a" style="left:457.8px;top:309.3px" width="10" height="4"><rect x="0.2" y="1.1" width="1.8" height="1.8" fill="#7020e2"/><rect x="3.2" y="1.1" width="1.8" height="1.8" fill="#7020e2"/><rect x="6.2" y="1.1" width="1.8" height="1.8" fill="#7020e2"/></svg>
  <div class="a" style="left:442.4px;top:316.2px;width:27.6px;height:8.8px;background:#ececec;border:0.5px solid #d9d5ea"></div>
  <div class="a" style="left:442.4px;top:326.8px;width:37.4px;height:128.2px;background:#8e8f91;"></div>
  <div class="a" style="left:446.0px;top:329.2px;width:16.8px;height:4.8px;background:#e30f17;"></div>
  <div class="a" style="left:446.0px;top:337.3px;width:30.3px;height:4.7px;background:#e30f17;"></div>
  <div class="a" style="left:446.0px;top:344.6px;width:30.3px;height:4.6px;background:#a2a2a4;"></div>
  <div class="a" style="left:446.0px;top:352.0px;width:30.3px;height:4.7px;background:#fafafa;"></div>
  <div class="a" style="left:446.0px;top:360.0px;width:30.3px;height:4.4px;background:#5e6063;"></div>
  <div class="a" style="left:446.0px;top:365.3px;width:30.3px;height:4.1px;background:#c2c2c2;"></div>
  <div class="a" style="left:444.2px;top:372.2px;width:34.0px;height:16.4px;background:#55585c;"></div>
  <div class="a" style="left:447.8px;top:377.0px;font-size:6.6px;line-height:7.9px;color:#fff;white-space:nowrap;font-weight:bold">10% OFF</div>
  <div class="a" style="left:444.2px;top:389.3px;width:34.0px;height:16.7px;background:#c6c6c6;"></div>
  <div class="a" style="left:447.8px;top:393.5px;font-size:6.6px;line-height:7.9px;color:#f4f4f4;white-space:nowrap;font-weight:bold">10% OFF</div>
  <div class="a" style="left:447.8px;top:441.5px;font-size:6.6px;line-height:7.9px;color:#fff;white-space:nowrap;font-weight:bold">10% OFF</div>
  <svg class="a" style="left:443.0px;top:326.0px" width="9.5" height="9.5" viewBox="0 0 12 12"><g fill="#7020e2"><path d="M6 0.4 L8.4 2.8 L6 5.2 L3.6 2.8Z"/><path d="M6 6.8 L8.4 9.2 L6 11.6 L3.6 9.2Z"/><path d="M0.4 6 L2.8 3.6 L5.2 6 L2.8 8.4Z"/><path d="M6.8 6 L9.2 3.6 L11.6 6 L9.2 8.4Z"/></g></svg>
  <svg class="a" style="left:446.0px;top:338.0px" width="9.5" height="9.5" viewBox="0 0 12 12"><g fill="#7020e2"><path d="M6 0.4 L8.4 2.8 L6 5.2 L3.6 2.8Z"/><path d="M6 6.8 L8.4 9.2 L6 11.6 L3.6 9.2Z"/><path d="M0.4 6 L2.8 3.6 L5.2 6 L2.8 8.4Z"/><path d="M6.8 6 L9.2 3.6 L11.6 6 L9.2 8.4Z"/></g></svg>
  <svg class="a" style="left:445.0px;top:349.0px" width="9.5" height="9.5" viewBox="0 0 12 12"><g fill="#7020e2"><path d="M6 0.4 L8.4 2.8 L6 5.2 L3.6 2.8Z"/><path d="M6 6.8 L8.4 9.2 L6 11.6 L3.6 9.2Z"/><path d="M0.4 6 L2.8 3.6 L5.2 6 L2.8 8.4Z"/><path d="M6.8 6 L9.2 3.6 L11.6 6 L9.2 8.4Z"/></g></svg>
  <svg class="a" style="left:445.0px;top:359.0px" width="9.5" height="9.5" viewBox="0 0 12 12"><g fill="#7020e2"><path d="M6 0.4 L8.4 2.8 L6 5.2 L3.6 2.8Z"/><path d="M6 6.8 L8.4 9.2 L6 11.6 L3.6 9.2Z"/><path d="M0.4 6 L2.8 3.6 L5.2 6 L2.8 8.4Z"/><path d="M6.8 6 L9.2 3.6 L11.6 6 L9.2 8.4Z"/></g></svg>
  <svg class="a" style="left:446.0px;top:414.0px" width="9.5" height="9.5" viewBox="0 0 12 12"><g fill="#7020e2"><path d="M6 0.4 L8.4 2.8 L6 5.2 L3.6 2.8Z"/><path d="M6 6.8 L8.4 9.2 L6 11.6 L3.6 9.2Z"/><path d="M0.4 6 L2.8 3.6 L5.2 6 L2.8 8.4Z"/><path d="M6.8 6 L9.2 3.6 L11.6 6 L9.2 8.4Z"/></g></svg>
  <svg class="a" style="left:446.0px;top:424.0px" width="9.5" height="9.5" viewBox="0 0 12 12"><g fill="#7020e2"><path d="M6 0.4 L8.4 2.8 L6 5.2 L3.6 2.8Z"/><path d="M6 6.8 L8.4 9.2 L6 11.6 L3.6 9.2Z"/><path d="M0.4 6 L2.8 3.6 L5.2 6 L2.8 8.4Z"/><path d="M6.8 6 L9.2 3.6 L11.6 6 L9.2 8.4Z"/></g></svg>
  <svg class="a" style="left:464.0px;top:327.5px" width="10" height="4"><rect x="0.2" y="1.1" width="1.8" height="1.8" fill="#7020e2"/><rect x="3.2" y="1.1" width="1.8" height="1.8" fill="#7020e2"/><rect x="6.2" y="1.1" width="1.8" height="1.8" fill="#7020e2"/></svg>
  <svg class="a" style="left:462.0px;top:340.0px" width="10" height="4"><rect x="0.2" y="1.1" width="1.8" height="1.8" fill="#7020e2"/><rect x="3.2" y="1.1" width="1.8" height="1.8" fill="#7020e2"/><rect x="6.2" y="1.1" width="1.8" height="1.8" fill="#7020e2"/></svg>
  <svg class="a" style="left:461.0px;top:346.0px" width="10" height="4"><rect x="0.2" y="1.1" width="1.8" height="1.8" fill="#7020e2"/><rect x="3.2" y="1.1" width="1.8" height="1.8" fill="#7020e2"/><rect x="6.2" y="1.1" width="1.8" height="1.8" fill="#7020e2"/></svg>
  <svg class="a" style="left:466.0px;top:363.0px" width="10" height="4"><rect x="0.2" y="1.1" width="1.8" height="1.8" fill="#7020e2"/><rect x="3.2" y="1.1" width="1.8" height="1.8" fill="#7020e2"/><rect x="6.2" y="1.1" width="1.8" height="1.8" fill="#7020e2"/></svg>
  <svg class="a" style="left:462.0px;top:410.0px" width="10" height="4"><rect x="0.2" y="1.1" width="1.8" height="1.8" fill="#7020e2"/><rect x="3.2" y="1.1" width="1.8" height="1.8" fill="#7020e2"/><rect x="6.2" y="1.1" width="1.8" height="1.8" fill="#7020e2"/></svg>
  <svg class="a" style="left:462.0px;top:420.0px" width="10" height="4"><rect x="0.2" y="1.1" width="1.8" height="1.8" fill="#7020e2"/><rect x="3.2" y="1.1" width="1.8" height="1.8" fill="#7020e2"/><rect x="6.2" y="1.1" width="1.8" height="1.8" fill="#7020e2"/></svg>
  <div class="a" style="left:419.5px;top:366.0px;width:15.4px;height:10.0px;background:#fbef86;box-shadow:0 0.5px 1px rgba(0,0,0,0.15)"></div>
  <div class="a" style="left:427.0px;top:362.0px;width:15.0px;height:0.6px;background:#bdbdbd;"></div>
  <div class="a" style="left:427.0px;top:362.0px;width:0.6px;height:4.0px;background:#bdbdbd;"></div>
  <svg class="a" style="left:488.2px;top:302.8px" width="11.0" height="11.0" viewBox="0 0 12 12"><g fill="#7020e2"><path d="M6 0.4 L8.4 2.8 L6 5.2 L3.6 2.8Z"/><path d="M6 6.8 L8.4 9.2 L6 11.6 L3.6 9.2Z"/><path d="M0.4 6 L2.8 3.6 L5.2 6 L2.8 8.4Z"/><path d="M6.8 6 L9.2 3.6 L11.6 6 L9.2 8.4Z"/></g></svg>
  <div class="a" style="left:503.2px;top:301.6px;font-size:12px;line-height:14.4px;color:#7020e2;white-space:nowrap;letter-spacing:-0.2px;-webkit-text-stroke:0.25px #7020e2;">L...</div>
  <div class="a" style="left:487.5px;top:316.2px;width:39.8px;height:18.6px;background:#ebebeb;border:0.5px solid #d9d5ea"></div>
  <div class="a" style="left:492.4px;top:317.8px;width:30.4px;height:6.5px;background:#262626;background-image:repeating-linear-gradient(90deg,rgba(255,255,255,0.18) 0 1px,transparent 1px 2.5px),repeating-linear-gradient(0deg,rgba(0,0,0,0.5) 0 1px,transparent 1px 2.2px)"></div>
  <div class="a" style="left:492.4px;top:326.0px;width:30.4px;height:7.4px;background:#262626;background-image:repeating-linear-gradient(90deg,rgba(255,255,255,0.18) 0 1px,transparent 1px 2.5px),repeating-linear-gradient(0deg,rgba(0,0,0,0.5) 0 1px,transparent 1px 2.2px)"></div>
  <div class="a" style="left:487.5px;top:338.3px;width:39.8px;height:17.5px;background:#ebebeb;border:0.5px solid #d9d5ea"></div>
  <div class="a" style="left:492.4px;top:339.8px;width:30.4px;height:5.7px;background:#262626;background-image:repeating-linear-gradient(90deg,rgba(255,255,255,0.18) 0 1px,transparent 1px 2.5px),repeating-linear-gradient(0deg,rgba(0,0,0,0.5) 0 1px,transparent 1px 2.2px)"></div>
  <div class="a" style="left:492.4px;top:347.0px;width:30.4px;height:7.0px;background:#262626;background-image:repeating-linear-gradient(90deg,rgba(255,255,255,0.18) 0 1px,transparent 1px 2.5px),repeating-linear-gradient(0deg,rgba(0,0,0,0.5) 0 1px,transparent 1px 2.2px)"></div>
  <svg class="a" style="left:489.0px;top:326.0px" width="9.5" height="9.5" viewBox="0 0 12 12"><g fill="#7020e2"><path d="M6 0.4 L8.4 2.8 L6 5.2 L3.6 2.8Z"/><path d="M6 6.8 L8.4 9.2 L6 11.6 L3.6 9.2Z"/><path d="M0.4 6 L2.8 3.6 L5.2 6 L2.8 8.4Z"/><path d="M6.8 6 L9.2 3.6 L11.6 6 L9.2 8.4Z"/></g></svg>
  <div class="a" style="left:503.0px;top:324.3px;font-size:12px;line-height:14.4px;color:#7020e2;white-space:nowrap;letter-spacing:-0.2px;-webkit-text-stroke:0.25px #7020e2;">L...</div>
  <svg class="a" style="left:491.0px;top:356.0px" width="10" height="4"><rect x="0.2" y="1.1" width="1.8" height="1.8" fill="#7020e2"/><rect x="3.2" y="1.1" width="1.8" height="1.8" fill="#7020e2"/><rect x="6.2" y="1.1" width="1.8" height="1.8" fill="#7020e2"/></svg>
  <svg class="a" style="left:508.0px;top:356.0px" width="10" height="4"><rect x="0.2" y="1.1" width="1.8" height="1.8" fill="#7020e2"/><rect x="3.2" y="1.1" width="1.8" height="1.8" fill="#7020e2"/><rect x="6.2" y="1.1" width="1.8" height="1.8" fill="#7020e2"/></svg>
  <svg class="a" style="left:491.0px;top:360.0px" width="10" height="4"><rect x="0.2" y="1.1" width="1.8" height="1.8" fill="#7020e2"/><rect x="3.2" y="1.1" width="1.8" height="1.8" fill="#7020e2"/><rect x="6.2" y="1.1" width="1.8" height="1.8" fill="#7020e2"/></svg>
  <div class="a" style="left:487.8px;top:360.4px;width:39.8px;height:62.8px;background:#8e8f91;"></div>
  <svg class="a" style="left:491.0px;top:375.0px" width="9.5" height="9.5" viewBox="0 0 12 12"><g fill="#7020e2"><path d="M6 0.4 L8.4 2.8 L6 5.2 L3.6 2.8Z"/><path d="M6 6.8 L8.4 9.2 L6 11.6 L3.6 9.2Z"/><path d="M0.4 6 L2.8 3.6 L5.2 6 L2.8 8.4Z"/><path d="M6.8 6 L9.2 3.6 L11.6 6 L9.2 8.4Z"/></g></svg>
  <svg class="a" style="left:505.0px;top:380.0px" width="10" height="4"><rect x="0.2" y="1.1" width="1.8" height="1.8" fill="#7020e2"/><rect x="3.2" y="1.1" width="1.8" height="1.8" fill="#7020e2"/><rect x="6.2" y="1.1" width="1.8" height="1.8" fill="#7020e2"/></svg>
  <svg class="a" style="left:492.0px;top:402.0px" width="9.5" height="9.5" viewBox="0 0 12 12"><g fill="#7020e2"><path d="M6 0.4 L8.4 2.8 L6 5.2 L3.6 2.8Z"/><path d="M6 6.8 L8.4 9.2 L6 11.6 L3.6 9.2Z"/><path d="M0.4 6 L2.8 3.6 L5.2 6 L2.8 8.4Z"/><path d="M6.8 6 L9.2 3.6 L11.6 6 L9.2 8.4Z"/></g></svg>
  <svg class="a" style="left:508.0px;top:409.0px" width="10" height="4"><rect x="0.2" y="1.1" width="1.8" height="1.8" fill="#7020e2"/><rect x="3.2" y="1.1" width="1.8" height="1.8" fill="#7020e2"/><rect x="6.2" y="1.1" width="1.8" height="1.8" fill="#7020e2"/></svg>
  <div class="a" style="left:499.0px;top:402.2px;font-size:4.6px;line-height:5.5px;color:#fff;white-space:nowrap;font-weight:bold">ck your texts</div>
  <div class="a" style="left:503.0px;top:387.0px;width:9.0px;height:13.0px;background:transparent;border:0.8px solid #ddd;border-radius:2px"></div>
  <svg class="a" style="left:488.0px;top:425.0px" width="9.5" height="9.5" viewBox="0 0 12 12"><g fill="#7020e2"><path d="M6 0.4 L8.4 2.8 L6 5.2 L3.6 2.8Z"/><path d="M6 6.8 L8.4 9.2 L6 11.6 L3.6 9.2Z"/><path d="M0.4 6 L2.8 3.6 L5.2 6 L2.8 8.4Z"/><path d="M6.8 6 L9.2 3.6 L11.6 6 L9.2 8.4Z"/></g></svg>
  <svg class="a" style="left:503.0px;top:431.0px" width="10" height="4"><rect x="0.2" y="1.1" width="1.8" height="1.8" fill="#7020e2"/><rect x="3.2" y="1.1" width="1.8" height="1.8" fill="#7020e2"/><rect x="6.2" y="1.1" width="1.8" height="1.8" fill="#7020e2"/></svg>
  <div class="a" style="left:489.0px;top:432.0px;width:5.0px;height:1.5px;background:#7020e2;"></div>
  <div class="a" style="left:486.5px;top:438.2px;width:41.1px;height:41.8px;background:#e8e8e8;border:0.5px solid #d9d5ea"></div>
  <div class="a" style="left:494px;top:439.5px;width:26px;height:26px;border-radius:50%;background:#fff"></div>
  <div class="a" style="left:495px;top:440.5px;width:24px;height:24px;border-radius:50%;background:#1f2124"></div>
  <svg class="a" style="left:495px;top:440.5px" width="24" height="24"><path d="M6 14.5 Q7 10 10 10.5 Q12 8.5 14 10.5 Q17 10 18 14.5 Z" fill="#fff"/></svg>
  <div class="a" style="left:504.5px;top:468px;width:5px;height:5px;border-radius:50%;background:#d0d0d0"></div>
  <svg class="a" style="left:536.4px;top:301.5px" width="11.0" height="11.0" viewBox="0 0 12 12"><g fill="#7020e2"><path d="M6 0.4 L8.4 2.8 L6 5.2 L3.6 2.8Z"/><path d="M6 6.8 L8.4 9.2 L6 11.6 L3.6 9.2Z"/><path d="M0.4 6 L2.8 3.6 L5.2 6 L2.8 8.4Z"/><path d="M6.8 6 L9.2 3.6 L11.6 6 L9.2 8.4Z"/></g></svg>
  <div class="a" style="left:550.7px;top:300.3px;font-size:12px;line-height:14.4px;color:#7020e2;white-space:nowrap;letter-spacing:-0.2px;-webkit-text-stroke:0.25px #7020e2;">Button...</div>
  <div class="a" style="left:535.5px;top:315.7px;width:66.5px;height:33.5px;background:#ebebeb;border:0.5px solid #d9d5ea"></div>
  <div class="a" style="left:537.4px;top:317.4px;width:30.5px;height:6.3px;background:#e30f17;"></div>
  <div class="a" style="left:537.4px;top:325.8px;width:30.5px;height:5.9px;background:#e30f17;"></div>
  <div class="a" style="left:537.4px;top:334.1px;width:30.5px;height:5.9px;background:#e30f17;"></div>
  <div class="a" style="left:537.4px;top:342.3px;width:30.5px;height:5.9px;background:#e30f17;"></div>
  <div class="a" style="left:570.0px;top:317.4px;width:30.4px;height:6.3px;background:#e30f17;"></div>
  <div class="a" style="left:570.0px;top:325.8px;width:30.4px;height:5.9px;background:#e30f17;"></div>
  <div class="a" style="left:570.0px;top:334.1px;width:30.4px;height:5.9px;background:#e30f17;"></div>
  <div class="a" style="left:535.5px;top:349.2px;width:66.8px;height:9.2px;background:#7a7b7d;"></div>
  <div class="a" style="left:537.5px;top:350.6px;width:30.0px;height:6.2px;background:#e30f17;"></div>
  <div class="a" style="left:570.0px;top:350.6px;width:30.4px;height:6.2px;background:#e30f17;"></div>
  <svg class="a" style="left:536.0px;top:343.5px" width="11.0" height="11.0" viewBox="0 0 12 12"><g fill="#7020e2"><path d="M6 0.4 L8.4 2.8 L6 5.2 L3.6 2.8Z"/><path d="M6 6.8 L8.4 9.2 L6 11.6 L3.6 9.2Z"/><path d="M0.4 6 L2.8 3.6 L5.2 6 L2.8 8.4Z"/><path d="M6.8 6 L9.2 3.6 L11.6 6 L9.2 8.4Z"/></g></svg>
  <div class="a" style="left:550.7px;top:342.3px;font-size:12px;line-height:14.4px;color:#7020e2;white-space:nowrap;letter-spacing:-0.2px;-webkit-text-stroke:0.25px #7020e2;">Input/E...</div>
  <div class="a" style="left:535.5px;top:362.5px;width:32.5px;height:28.5px;background:#ebebeb;border:0.5px solid #d9d5ea"></div>
  <div class="a" style="left:537.5px;top:364.5px;width:30.5px;height:5.0px;background:#fafafa;"></div>
  <div class="a" style="left:537.5px;top:371.0px;width:30.5px;height:5.0px;background:#fafafa;"></div>
  <div class="a" style="left:537.5px;top:377.5px;width:30.5px;height:5.0px;background:#fafafa;"></div>
  <div class="a" style="left:563.0px;top:371.5px;width:4.5px;height:4.0px;background:#e30f17;"></div>
  <div class="a" style="left:569.1px;top:362.7px;width:33.3px;height:75.7px;background:#8e8f91;"></div>
  <div class="a" style="left:570.0px;top:368.0px;width:30.0px;height:0.6px;background:#a8a8a8;"></div>
  <svg class="a" style="left:536.0px;top:377.5px" width="11.0" height="11.0" viewBox="0 0 12 12"><g fill="#7020e2"><path d="M6 0.4 L8.4 2.8 L6 5.2 L3.6 2.8Z"/><path d="M6 6.8 L8.4 9.2 L6 11.6 L3.6 9.2Z"/><path d="M0.4 6 L2.8 3.6 L5.2 6 L2.8 8.4Z"/><path d="M6.8 6 L9.2 3.6 L11.6 6 L9.2 8.4Z"/></g></svg>
  <div class="a" style="left:550.7px;top:376.3px;font-size:12px;line-height:14.4px;color:#7020e2;white-space:nowrap;letter-spacing:-0.2px;-webkit-text-stroke:0.25px #7020e2;">Input/S...</div>
  <div class="a" style="left:535.5px;top:395.3px;width:32.5px;height:43.1px;background:#ebebeb;border:0.5px solid #d9d5ea"></div>
  <div class="a" style="left:537.5px;top:397.5px;width:30.5px;height:5.0px;background:#fafafa;"></div>
  <div class="a" style="left:537.5px;top:404.0px;width:30.5px;height:5.0px;background:#fafafa;"></div>
  <div class="a" style="left:537.5px;top:410.5px;width:30.5px;height:5.0px;background:#fafafa;"></div>
  <div class="a" style="left:537.5px;top:417.0px;width:30.5px;height:5.0px;background:#fafafa;"></div>
  <div class="a" style="left:537.5px;top:424.0px;width:30.5px;height:5.0px;background:#fafafa;"></div>
  <div class="a" style="left:563.0px;top:404.5px;width:4.5px;height:4.0px;background:#e30f17;"></div>
  <div class="a" style="left:558.0px;top:417.0px;width:10.0px;height:4.5px;background:#e30f17;"></div>
  <div class="a" style="left:570.0px;top:402.0px;width:30.0px;height:0.6px;background:#a8a8a8;"></div>
  <svg class="a" style="left:570.0px;top:400.0px" width="10.0" height="10.0" viewBox="0 0 12 12"><g fill="#7020e2"><path d="M6 0.4 L8.4 2.8 L6 5.2 L3.6 2.8Z"/><path d="M6 6.8 L8.4 9.2 L6 11.6 L3.6 9.2Z"/><path d="M0.4 6 L2.8 3.6 L5.2 6 L2.8 8.4Z"/><path d="M6.8 6 L9.2 3.6 L11.6 6 L9.2 8.4Z"/></g></svg>
  <div class="a" style="left:584.0px;top:398.5px;font-size:12px;line-height:14.4px;color:#7020e2;white-space:nowrap;letter-spacing:-0.2px;-webkit-text-stroke:0.25px #7020e2;">I...</div>
  <svg class="a" style="left:538.0px;top:413.0px" width="9.5" height="9.5" viewBox="0 0 12 12"><g fill="#7020e2"><path d="M6 0.4 L8.4 2.8 L6 5.2 L3.6 2.8Z"/><path d="M6 6.8 L8.4 9.2 L6 11.6 L3.6 9.2Z"/><path d="M0.4 6 L2.8 3.6 L5.2 6 L2.8 8.4Z"/><path d="M6.8 6 L9.2 3.6 L11.6 6 L9.2 8.4Z"/></g></svg>
  <svg class="a" style="left:552.0px;top:419.0px" width="10" height="4"><rect x="0.2" y="1.1" width="1.8" height="1.8" fill="#7020e2"/><rect x="3.2" y="1.1" width="1.8" height="1.8" fill="#7020e2"/><rect x="6.2" y="1.1" width="1.8" height="1.8" fill="#7020e2"/></svg>
  <div class="a" style="left:571.0px;top:414.0px;width:29.0px;height:5.0px;background:transparent;border:0.5px solid #a8a8a8"></div>
  <div class="a" style="left:571.0px;top:421.0px;width:29.0px;height:5.0px;background:transparent;border:0.5px solid #a8a8a8"></div>
  <svg class="a" style="left:611.0px;top:305.5px" width="11.0" height="11.0" viewBox="0 0 12 12"><g fill="#7020e2"><path d="M6 0.4 L8.4 2.8 L6 5.2 L3.6 2.8Z"/><path d="M6 6.8 L8.4 9.2 L6 11.6 L3.6 9.2Z"/><path d="M0.4 6 L2.8 3.6 L5.2 6 L2.8 8.4Z"/><path d="M6.8 6 L9.2 3.6 L11.6 6 L9.2 8.4Z"/></g></svg>
  <svg class="a" style="left:625.8px;top:312.3px" width="10" height="4"><rect x="0.2" y="1.1" width="1.8" height="1.8" fill="#7020e2"/><rect x="3.2" y="1.1" width="1.8" height="1.8" fill="#7020e2"/><rect x="6.2" y="1.1" width="1.8" height="1.8" fill="#7020e2"/></svg>
  <div class="a" style="left:610.3px;top:319.4px;width:36.4px;height:62.1px;background:#8e8f91;"></div>
  <svg class="a" style="left:651.8px;top:305.5px" width="11.0" height="11.0" viewBox="0 0 12 12"><g fill="#7020e2"><path d="M6 0.4 L8.4 2.8 L6 5.2 L3.6 2.8Z"/><path d="M6 6.8 L8.4 9.2 L6 11.6 L3.6 9.2Z"/><path d="M0.4 6 L2.8 3.6 L5.2 6 L2.8 8.4Z"/><path d="M6.8 6 L9.2 3.6 L11.6 6 L9.2 8.4Z"/></g></svg>
  <svg class="a" style="left:666.6px;top:312.3px" width="10" height="4"><rect x="0.2" y="1.1" width="1.8" height="1.8" fill="#7020e2"/><rect x="3.2" y="1.1" width="1.8" height="1.8" fill="#7020e2"/><rect x="6.2" y="1.1" width="1.8" height="1.8" fill="#7020e2"/></svg>
  <div class="a" style="left:651.1px;top:319.4px;width:30.9px;height:39.7px;background:#c3c3c4;border-left:0.5px solid #c9c4e0;border-right:0.5px solid #c9c4e0;border-top:0.5px solid #c9c4e0"></div>
  <div class="a" style="left:651.1px;top:359.1px;width:30.9px;height:52.7px;background:#8e8f91;"></div>
  <div class="a" style="left:653.9px;top:334.8px;width:25.4px;height:5.6px;background:#e30f17;"></div>
  <div class="a" style="left:653.9px;top:376.0px;width:25.4px;height:5.7px;background:#e30f17;"></div>
  <div class="a" style="left:654.0px;top:331.0px;width:25.0px;height:0.5px;background:#dcdcdc;"></div>
  <div class="a" style="left:654.0px;top:372.0px;width:25.0px;height:0.5px;background:#aaa;"></div>
  <div class="a" style="left:651.1px;top:393.5px;width:30.9px;height:7.7px;background:#444;background-image:repeating-linear-gradient(90deg,#f5f5f5 0 1px,#333 1px 2px,#ddd 2px 2.6px,#222 2.6px 4.2px)"></div>
  <div class="a" style="left:651.1px;top:401.2px;width:30.9px;height:2.3px;background:#f7f7f7;"></div>
  <svg class="a" style="left:685.2px;top:305.5px" width="11.0" height="11.0" viewBox="0 0 12 12"><g fill="#7020e2"><path d="M6 0.4 L8.4 2.8 L6 5.2 L3.6 2.8Z"/><path d="M6 6.8 L8.4 9.2 L6 11.6 L3.6 9.2Z"/><path d="M0.4 6 L2.8 3.6 L5.2 6 L2.8 8.4Z"/><path d="M6.8 6 L9.2 3.6 L11.6 6 L9.2 8.4Z"/></g></svg>
  <svg class="a" style="left:700.0px;top:312.3px" width="10" height="4"><rect x="0.2" y="1.1" width="1.8" height="1.8" fill="#7020e2"/><rect x="3.2" y="1.1" width="1.8" height="1.8" fill="#7020e2"/><rect x="6.2" y="1.1" width="1.8" height="1.8" fill="#7020e2"/></svg>
  <div class="a" style="left:686.0px;top:319.4px;width:34.0px;height:17.7px;background:#ffffff;border-radius:1px"></div>
  <div class="a" style="left:690.0px;top:327.5px;width:18.0px;height:6.5px;background:#fff;border:0.5px solid #e4e4e4"></div>
  <div class="a" style="left:692.0px;top:330.0px;width:12.0px;height:2.0px;background:#333;"></div>
  <div class="a" style="left:709.0px;top:329.9px;width:8.2px;height:4.1px;background:#000;"></div>
  <div class="a" style="left:696.0px;top:322.0px;width:16.0px;height:1.0px;background:#555;"></div>
  <div class="a" style="left:686.0px;top:341.5px;width:19.0px;height:1.0px;background:#555;"></div>
  <div class="a" style="left:684.8px;top:372.0px;width:36.6px;height:4.9px;background:#e30f17;"></div>
  <svg class="a" style="left:724.4px;top:306.0px" width="11.0" height="11.0" viewBox="0 0 12 12"><g fill="#7020e2"><path d="M6 0.4 L8.4 2.8 L6 5.2 L3.6 2.8Z"/><path d="M6 6.8 L8.4 9.2 L6 11.6 L3.6 9.2Z"/><path d="M0.4 6 L2.8 3.6 L5.2 6 L2.8 8.4Z"/><path d="M6.8 6 L9.2 3.6 L11.6 6 L9.2 8.4Z"/></g></svg>
  <div class="a" style="left:738.8px;top:304.8px;font-size:12px;line-height:14.4px;color:#7020e2;white-space:nowrap;letter-spacing:-0.2px;-webkit-text-stroke:0.25px #7020e2;">Creative B...</div>
  <div class="a" style="left:724.0px;top:318.8px;width:85.8px;height:191.8px;background:#eaeaea;border:0.5px solid #dcd9ea"></div>
  <div class="a" style="left:736.0px;top:321.5px;width:59.0px;height:59.0px;background:#8e8f91;"></div>
  <div class="a" style="left:726.0px;top:384.0px;width:39.0px;height:59.0px;background:#8e8f91;"></div>
  <svg class="a" style="left:765.0px;top:384.0px" width="39.2" height="59.0" viewBox="0 0 100 100" preserveAspectRatio="none"><rect width="100" height="100" fill="#e4d96c"/><ellipse cx="52" cy="88" rx="34" ry="2.5" fill="rgba(110,100,30,0.25)"/><rect x="25" y="15" width="30" height="72" fill="#e6d24c"/><rect x="25" y="15" width="30" height="2" fill="#ecdc60"/><path d="M43 21 L76 21 L73 80 L47 80 Z" fill="#f3f3f5"/><path d="M69 21 L76 21 L73 80 L68 80 Z" fill="#e6e6ea"/><rect x="49" y="80" width="22" height="7" fill="#eed03a"/><rect x="49" y="39.5" width="19" height="3.5" fill="#2a2a2a"/><rect x="55" y="36" width="8" height="1.5" fill="#e2c83a"/></svg>
  <svg class="a" style="left:726.0px;top:447.0px" width="39.0" height="58.5" viewBox="0 0 100 100" preserveAspectRatio="none"><rect width="100" height="100" fill="#e4d96c"/><ellipse cx="52" cy="88" rx="34" ry="2.5" fill="rgba(110,100,30,0.25)"/><rect x="25" y="15" width="30" height="72" fill="#e6d24c"/><rect x="25" y="15" width="30" height="2" fill="#ecdc60"/><path d="M43 21 L76 21 L73 80 L47 80 Z" fill="#f3f3f5"/><path d="M69 21 L76 21 L73 80 L68 80 Z" fill="#e6e6ea"/><rect x="49" y="80" width="22" height="7" fill="#eed03a"/><rect x="49" y="39.5" width="19" height="3.5" fill="#2a2a2a"/><rect x="55" y="36" width="8" height="1.5" fill="#e2c83a"/></svg>
  <div class="a" style="left:765.0px;top:447.0px;width:39.2px;height:58.5px;background:#8e8f91;"></div>
  <svg class="a" style="left:818.6px;top:306.0px" width="11.0" height="11.0" viewBox="0 0 12 12"><g fill="#7020e2"><path d="M6 0.4 L8.4 2.8 L6 5.2 L3.6 2.8Z"/><path d="M6 6.8 L8.4 9.2 L6 11.6 L3.6 9.2Z"/><path d="M0.4 6 L2.8 3.6 L5.2 6 L2.8 8.4Z"/><path d="M6.8 6 L9.2 3.6 L11.6 6 L9.2 8.4Z"/></g></svg>
  <div class="a" style="left:832.6px;top:304.8px;font-size:12px;line-height:14.4px;color:#7020e2;white-space:nowrap;letter-spacing:-0.2px;-webkit-text-stroke:0.25px #7020e2;">GSG Landing P...</div>
  <div class="a" style="left:817.5px;top:320.0px;width:108.5px;height:231.0px;background:#ebebeb;border:0.5px solid #d9d5ea"></div>
  <div class="a" style="left:819.3px;top:321.0px;width:105.7px;height:75.0px;background:#8e8f91;"></div>
  <div class="a" style="left:819.3px;top:398.2px;width:52.5px;height:74.8px;background:#8e8f91;"></div>
  <svg class="a" style="left:871.8px;top:398.2px" width="53.2" height="74.8" viewBox="0 0 100 100" preserveAspectRatio="none"><rect width="100" height="100" fill="#e4d96c"/><ellipse cx="52" cy="88" rx="34" ry="2.5" fill="rgba(110,100,30,0.25)"/><rect x="25" y="15" width="30" height="72" fill="#e6d24c"/><rect x="25" y="15" width="30" height="2" fill="#ecdc60"/><path d="M43 21 L76 21 L73 80 L47 80 Z" fill="#f3f3f5"/><path d="M69 21 L76 21 L73 80 L68 80 Z" fill="#e6e6ea"/><rect x="49" y="80" width="22" height="7" fill="#eed03a"/><rect x="49" y="39.5" width="19" height="3.5" fill="#2a2a2a"/><rect x="55" y="36" width="8" height="1.5" fill="#e2c83a"/></svg>
  <svg class="a" style="left:819.3px;top:475.0px" width="52.5" height="74.9" viewBox="0 0 100 100" preserveAspectRatio="none"><rect width="100" height="100" fill="#e4d96c"/><ellipse cx="52" cy="88" rx="34" ry="2.5" fill="rgba(110,100,30,0.25)"/><rect x="25" y="15" width="30" height="72" fill="#e6d24c"/><rect x="25" y="15" width="30" height="2" fill="#ecdc60"/><path d="M43 21 L76 21 L73 80 L47 80 Z" fill="#f3f3f5"/><path d="M69 21 L76 21 L73 80 L68 80 Z" fill="#e6e6ea"/><rect x="49" y="80" width="22" height="7" fill="#eed03a"/><rect x="49" y="39.5" width="19" height="3.5" fill="#2a2a2a"/><rect x="55" y="36" width="8" height="1.5" fill="#e2c83a"/></svg>
  <div class="a" style="left:871.8px;top:475.0px;width:53.2px;height:74.9px;background:#8e8f91;"></div>
  <svg class="a" style="left:443.0px;top:486.8px" width="11.0" height="11.0" viewBox="0 0 12 12"><g fill="#7020e2"><path d="M6 0.4 L8.4 2.8 L6 5.2 L3.6 2.8Z"/><path d="M6 6.8 L8.4 9.2 L6 11.6 L3.6 9.2Z"/><path d="M0.4 6 L2.8 3.6 L5.2 6 L2.8 8.4Z"/><path d="M6.8 6 L9.2 3.6 L11.6 6 L9.2 8.4Z"/></g></svg>
  <div class="a" style="left:457.5px;top:485.6px;font-size:12px;line-height:14.4px;color:#7020e2;white-space:nowrap;letter-spacing:-0.2px;-webkit-text-stroke:0.25px #7020e2;">C...</div>
  <svg class="a" style="left:443.0px;top:501.0px" width="10.5" height="10.5" viewBox="0 0 12 12"><g fill="#7020e2"><path d="M6 0.4 L8.4 2.8 L6 5.2 L3.6 2.8Z"/><path d="M6 6.8 L8.4 9.2 L6 11.6 L3.6 9.2Z"/><path d="M0.4 6 L2.8 3.6 L5.2 6 L2.8 8.4Z"/><path d="M6.8 6 L9.2 3.6 L11.6 6 L9.2 8.4Z"/></g></svg>
  <div class="a" style="left:457.5px;top:499.8px;font-size:12px;line-height:14.4px;color:#7020e2;white-space:nowrap;letter-spacing:-0.2px;-webkit-text-stroke:0.25px #7020e2;">S...</div>
  <div class="a" style="left:443.0px;top:499.2px;font-size:8px;line-height:9.6px;color:#222;white-space:nowrap;letter-spacing:-0.3px">Company</div>
  <div class="a" style="left:442.1px;top:514.7px;width:36.9px;height:62.3px;background:#ffffff;"></div>
  <div class="a" style="left:442.1px;top:514.7px;width:36.9px;height:5.5px;background:#f6bcad;"></div>
  <div class="a" style="left:442.1px;top:523.3px;width:36.9px;height:24.7px;background:#cfe089;"></div>
  <div class="a" style="left:459.0px;top:541.0px;width:9.0px;height:6.0px;background:#8cb43a;border-radius:1px"></div>
  <div class="a" style="left:446.0px;top:536.0px;width:10.0px;height:2.0px;background:#1a1a2a;"></div>
  <div class="a" style="left:446.0px;top:528.0px;width:12.0px;height:3.0px;background:#555;"></div>
  <div class="a" style="left:442.1px;top:548.0px;width:36.9px;height:14.8px;background:#e6f3bf;"></div>
  <div class="a" style="left:442.1px;top:568.0px;width:17.5px;height:9.0px;background:#edd455;"></div>
  <div class="a" style="left:462.0px;top:568.0px;width:17.0px;height:9.0px;background:#f1c1b0;"></div>
  <svg class="a" style="left:487.2px;top:500.6px" width="11.0" height="11.0" viewBox="0 0 12 12"><g fill="#7020e2"><path d="M6 0.4 L8.4 2.8 L6 5.2 L3.6 2.8Z"/><path d="M6 6.8 L8.4 9.2 L6 11.6 L3.6 9.2Z"/><path d="M0.4 6 L2.8 3.6 L5.2 6 L2.8 8.4Z"/><path d="M6.8 6 L9.2 3.6 L11.6 6 L9.2 8.4Z"/></g></svg>
  <div class="a" style="left:501.5px;top:499.4px;font-size:12px;line-height:14.4px;color:#7020e2;white-space:nowrap;letter-spacing:-0.2px;-webkit-text-stroke:0.25px #7020e2;">Site Screensh...</div>
  <div class="a" style="left:486.7px;top:514.0px;width:106.4px;height:76.1px;background:#fafafa;border-radius:2px"></div>
  <div class="a" style="left:487.5px;top:514.8px;width:104.8px;height:4.7px;background:#4b3936;"></div>
  <div class="a" style="left:487.5px;top:519.5px;width:104.8px;height:7.0px;background:#4a4a48;"></div>
  <div class="a" style="left:487.5px;top:526.5px;width:104.8px;height:43.5px;background:#4c4f3d;"></div>
  <div class="a" style="left:487.5px;top:570.0px;width:104.8px;height:19.3px;background:#4a4a4a;border-radius:0 0 2px 2px"></div>
  <div class="a" style="left:490.5px;top:542.5px;width:24.5px;height:2.0px;background:#3a3a32;"></div>
  <div class="a" style="left:490.5px;top:551.0px;width:11.5px;height:2.5px;background:#1b1b1b;"></div>
  <div class="a" style="left:534.5px;top:546.0px;width:23.5px;height:19.0px;background:#5e6a2c;border-radius:3px"></div>
  <div class="a" style="left:534.5px;top:546.0px;width:23.5px;height:3.0px;background:#66665e;border-radius:3px"></div>
  <div class="a" style="left:559.0px;top:547.0px;width:31.0px;height:20.0px;background:#545452;"></div>
  <div class="a" style="left:563.0px;top:527.0px;width:24.0px;height:20.0px;background:#5a5a55;border-radius:50%"></div>
  <div class="a" style="left:490.0px;top:577.5px;width:15.0px;height:11.5px;background:#5a5534;"></div>
  <div class="a" style="left:515.0px;top:577.5px;width:15.0px;height:11.5px;background:#5a4743;"></div>
  <div class="a" style="left:532.2px;top:471.7px;width:36.1px;height:28.6px;background:#8e8f91;"></div>
  <div class="a" style="left:572.8px;top:472.5px;width:33.2px;height:27.8px;background:#8e8f91;"></div>
  <div class="a" style="left:534.0px;top:446.7px;width:20.5px;height:15.3px;background:#fbef86;box-shadow:0 0.5px 1px rgba(0,0,0,0.15)"></div>
  <div class="a" style="left:528.0px;top:443.0px;width:13.0px;height:0.6px;background:#c8c8c8;"></div>
  <svg class="a" style="left:534.0px;top:458.0px" width="10.0" height="10.0" viewBox="0 0 12 12"><g fill="#7020e2"><path d="M6 0.4 L8.4 2.8 L6 5.2 L3.6 2.8Z"/><path d="M6 6.8 L8.4 9.2 L6 11.6 L3.6 9.2Z"/><path d="M0.4 6 L2.8 3.6 L5.2 6 L2.8 8.4Z"/><path d="M6.8 6 L9.2 3.6 L11.6 6 L9.2 8.4Z"/></g></svg>
  <svg class="a" style="left:549.0px;top:465.0px" width="10" height="4"><rect x="0.2" y="1.1" width="1.8" height="1.8" fill="#7020e2"/><rect x="3.2" y="1.1" width="1.8" height="1.8" fill="#7020e2"/><rect x="6.2" y="1.1" width="1.8" height="1.8" fill="#7020e2"/></svg>
  <svg class="a" style="left:574.0px;top:458.0px" width="10.0" height="10.0" viewBox="0 0 12 12"><g fill="#7020e2"><path d="M6 0.4 L8.4 2.8 L6 5.2 L3.6 2.8Z"/><path d="M6 6.8 L8.4 9.2 L6 11.6 L3.6 9.2Z"/><path d="M0.4 6 L2.8 3.6 L5.2 6 L2.8 8.4Z"/><path d="M6.8 6 L9.2 3.6 L11.6 6 L9.2 8.4Z"/></g></svg>
  <svg class="a" style="left:589.0px;top:465.0px" width="10" height="4"><rect x="0.2" y="1.1" width="1.8" height="1.8" fill="#7020e2"/><rect x="3.2" y="1.1" width="1.8" height="1.8" fill="#7020e2"/><rect x="6.2" y="1.1" width="1.8" height="1.8" fill="#7020e2"/></svg>
  <svg class="a" style="left:610.8px;top:474.5px" width="11.0" height="11.0" viewBox="0 0 12 12"><g fill="#7020e2"><path d="M6 0.4 L8.4 2.8 L6 5.2 L3.6 2.8Z"/><path d="M6 6.8 L8.4 9.2 L6 11.6 L3.6 9.2Z"/><path d="M0.4 6 L2.8 3.6 L5.2 6 L2.8 8.4Z"/><path d="M6.8 6 L9.2 3.6 L11.6 6 L9.2 8.4Z"/></g></svg>
  <div class="a" style="left:625.0px;top:473.3px;font-size:12px;line-height:14.4px;color:#7020e2;white-space:nowrap;letter-spacing:-0.2px;-webkit-text-stroke:0.25px #7020e2;">Creative Back...</div>
  <div class="a" style="left:610.3px;top:488.3px;width:105.7px;height:12.0px;background:#8e8f91;border-radius:1.5px"></div>
  <div class="a" style="left:599.1px;top:499.5px;font-size:12px;line-height:14.4px;color:#8d8d8d;white-space:nowrap;letter-spacing:-0.2px;-webkit-text-stroke:0.25px #8d8d8d;">Pref...</div>
  <div class="a" style="left:598.9px;top:514.4px;width:36.8px;height:79.6px;background:#fff;border-radius:2px;box-shadow:0 0 1px rgba(0,0,0,0.2)"></div>
  <div class="a" style="left:614.9px;top:517px;width:5px;height:5px;border-radius:50%;background:#cfcfcf"></div>
  <div class="a" style="left:612.9px;top:523.0px;width:9.0px;height:0.8px;background:#bbb;"></div>
  <div class="a" style="left:598.9px;top:526.3px;width:36.8px;height:0.5px;background:#eeeeee;"></div>
  <div class="a" style="left:601.9px;top:578.2px;width:30.0px;height:13.8px;background:#fff;border:0.5px solid #eee"></div>
  <div class="a" style="left:603.9px;top:580.0px;width:23.0px;height:7.0px;background:transparent;background-image:repeating-linear-gradient(0deg,#888 0 0.7px,transparent 0.7px 2px)"></div>
  <div class="a" style="left:629.9px;top:588px;width:3.2px;height:3.2px;border-radius:50%;background:#222"></div>
  <div class="a" style="left:640.2px;top:499.5px;font-size:12px;line-height:14.4px;color:#8d8d8d;white-space:nowrap;letter-spacing:-0.2px;-webkit-text-stroke:0.25px #8d8d8d;">Wel...</div>
  <div class="a" style="left:640.0px;top:514.4px;width:36.7px;height:79.6px;background:#fff;border-radius:2px;box-shadow:0 0 1px rgba(0,0,0,0.2)"></div>
  <div class="a" style="left:656.0px;top:517px;width:5px;height:5px;border-radius:50%;background:#cfcfcf"></div>
  <div class="a" style="left:654.0px;top:523.0px;width:9.0px;height:0.8px;background:#bbb;"></div>
  <div class="a" style="left:640.0px;top:526.3px;width:36.7px;height:0.5px;background:#eeeeee;"></div>
  <div class="a" style="left:650.2px;top:529.0px;width:23.9px;height:13.0px;background:#2fb44b;border-radius:1.5px"></div>
  <div class="a" style="left:651.5px;top:530.5px;width:21.5px;height:10.0px;background:transparent;background-image:repeating-linear-gradient(0deg,rgba(255,255,255,0.35) 0 0.7px,transparent 0.7px 2px)"></div>
  <div class="a" style="left:643.1px;top:543.7px;width:27.6px;height:11.2px;background:#ececec;border-radius:1px"></div>
  <div class="a" style="left:643.1px;top:557.5px;width:27.6px;height:11.8px;background:#ececec;border-radius:1px"></div>
  <div class="a" style="left:644.0px;top:545.0px;width:24.0px;height:8.0px;background:transparent;background-image:repeating-linear-gradient(0deg,#aaa 0 0.7px,transparent 0.7px 2px)"></div>
  <div class="a" style="left:644.0px;top:559.0px;width:24.0px;height:9.0px;background:transparent;background-image:repeating-linear-gradient(0deg,#aaa 0 0.7px,transparent 0.7px 2px)"></div>
  <div class="a" style="left:642.0px;top:587.7px;width:32.7px;height:4.3px;background:#fff;border:0.5px solid #eee;border-radius:2px"></div>
  <div class="a" style="left:671.0px;top:588px;width:3.2px;height:3.2px;border-radius:50%;background:#222"></div>
  <div class="a" style="left:681.2px;top:499.5px;font-size:12px;line-height:14.4px;color:#8d8d8d;white-space:nowrap;letter-spacing:-0.2px;-webkit-text-stroke:0.25px #8d8d8d;">Wel...</div>
  <div class="a" style="left:681.0px;top:514.4px;width:36.8px;height:79.6px;background:#fff;border-radius:2px;box-shadow:0 0 1px rgba(0,0,0,0.2)"></div>
  <div class="a" style="left:697.0px;top:517px;width:5px;height:5px;border-radius:50%;background:#cfcfcf"></div>
  <div class="a" style="left:695.0px;top:523.0px;width:9.0px;height:0.8px;background:#bbb;"></div>
  <div class="a" style="left:681.0px;top:526.3px;width:36.8px;height:0.5px;background:#eeeeee;"></div>
  <div class="a" style="left:691.2px;top:529.0px;width:23.9px;height:13.0px;background:#2fb44b;border-radius:1.5px"></div>
  <div class="a" style="left:692.5px;top:530.5px;width:21.5px;height:10.0px;background:transparent;background-image:repeating-linear-gradient(0deg,rgba(255,255,255,0.35) 0 0.7px,transparent 0.7px 2px)"></div>
  <div class="a" style="left:684.1px;top:543.7px;width:27.6px;height:11.2px;background:#ececec;border-radius:1px"></div>
  <div class="a" style="left:684.1px;top:557.5px;width:27.6px;height:13.8px;background:#ececec;border-radius:1px"></div>
  <div class="a" style="left:685.0px;top:545.0px;width:24.0px;height:8.0px;background:transparent;background-image:repeating-linear-gradient(0deg,#aaa 0 0.7px,transparent 0.7px 2px)"></div>
  <div class="a" style="left:685.0px;top:559.0px;width:24.0px;height:9.0px;background:transparent;background-image:repeating-linear-gradient(0deg,#aaa 0 0.7px,transparent 0.7px 2px)"></div>
  <div class="a" style="left:683.0px;top:587.7px;width:32.8px;height:4.3px;background:#fff;border:0.5px solid #eee;border-radius:2px"></div>
  <div class="a" style="left:712.0px;top:588px;width:3.2px;height:3.2px;border-radius:50%;background:#222"></div>
  <svg class="a" style="left:1083.9px;top:310.2px" width="11.1" height="11.1" viewBox="0 0 12 12"><g fill="#7020e2"><path d="M6 0.4 L8.4 2.8 L6 5.2 L3.6 2.8Z"/><path d="M6 6.8 L8.4 9.2 L6 11.6 L3.6 9.2Z"/><path d="M0.4 6 L2.8 3.6 L5.2 6 L2.8 8.4Z"/><path d="M6.8 6 L9.2 3.6 L11.6 6 L9.2 8.4Z"/></g></svg>
  <svg class="a" style="left:1096.0px;top:317.2px" width="10" height="4"><rect x="0.2" y="1.1" width="1.8" height="1.8" fill="#7020e2"/><rect x="3.2" y="1.1" width="1.8" height="1.8" fill="#7020e2"/><rect x="6.2" y="1.1" width="1.8" height="1.8" fill="#7020e2"/></svg>
  <div class="a" style="left:1084.5px;top:325.0px;width:27.5px;height:11.0px;background:#e8e8e8;background-image:repeating-linear-gradient(0deg,#666 0 0.6px,transparent 0.6px 2px)"></div>
  <svg class="a" style="left:449.4px;top:788.6px" width="10.8" height="10.8" viewBox="0 0 12 12"><g fill="#7020e2"><path d="M6 0.4 L8.4 2.8 L6 5.2 L3.6 2.8Z"/><path d="M6 6.8 L8.4 9.2 L6 11.6 L3.6 9.2Z"/><path d="M0.4 6 L2.8 3.6 L5.2 6 L2.8 8.4Z"/><path d="M6.8 6 L9.2 3.6 L11.6 6 L9.2 8.4Z"/></g></svg>
  <svg class="a" style="left:449.4px;top:796.0px" width="10.8" height="10.8" viewBox="0 0 12 12"><g fill="#7020e2"><path d="M6 0.4 L8.4 2.8 L6 5.2 L3.6 2.8Z"/><path d="M6 6.8 L8.4 9.2 L6 11.6 L3.6 9.2Z"/><path d="M0.4 6 L2.8 3.6 L5.2 6 L2.8 8.4Z"/><path d="M6.8 6 L9.2 3.6 L11.6 6 L9.2 8.4Z"/></g></svg>
  <div class="a" style="left:464.3px;top:790.0px;width:1.7px;height:16.0px;background:#7020e2;"></div>
  <svg class="a" style="left:467.0px;top:795.0px" width="10" height="4"><rect x="0.2" y="1.1" width="1.8" height="1.8" fill="#7020e2"/><rect x="3.2" y="1.1" width="1.8" height="1.8" fill="#7020e2"/><rect x="6.2" y="1.1" width="1.8" height="1.8" fill="#7020e2"/></svg>
  <svg class="a" style="left:467.0px;top:803.0px" width="10" height="4"><rect x="0.2" y="1.1" width="1.8" height="1.8" fill="#7020e2"/><rect x="3.2" y="1.1" width="1.8" height="1.8" fill="#7020e2"/><rect x="6.2" y="1.1" width="1.8" height="1.8" fill="#7020e2"/></svg>
  <div class="a" style="left:449.0px;top:802.6px;width:36.2px;height:2.4px;background:#9a9a9a;box-shadow:0 1px 1px rgba(0,0,0,0.1)"></div>
  <div class="a" style="left:445.5px;top:809.7px;width:1.7px;height:10.8px;background:#e8141b;"></div>
  <div class="a" style="left:445.5px;top:820.5px;width:1.7px;height:43.0px;background:#3cc13b;"></div>
  <div class="a" style="left:445.5px;top:863.5px;width:1.7px;height:11.8px;background:#e8141b;"></div>
  <svg class="a" style="left:449.0px;top:809.7px" width="36.6" height="32.8" viewBox="0 0 100 100" preserveAspectRatio="none"><rect width="100" height="100" fill="#e4d96c"/><ellipse cx="52" cy="88" rx="34" ry="2.5" fill="rgba(110,100,30,0.25)"/><rect x="25" y="15" width="30" height="72" fill="#e6d24c"/><rect x="25" y="15" width="30" height="2" fill="#ecdc60"/><path d="M43 21 L76 21 L73 80 L47 80 Z" fill="#f3f3f5"/><path d="M69 21 L76 21 L73 80 L68 80 Z" fill="#e6e6ea"/><rect x="49" y="80" width="22" height="7" fill="#eed03a"/><rect x="49" y="39.5" width="19" height="3.5" fill="#2a2a2a"/><rect x="55" y="36" width="8" height="1.5" fill="#e2c83a"/></svg>
  <div class="a" style="left:449.0px;top:842.5px;width:36.6px;height:32.3px;background:#55585c;"></div>
  <div class="a" style="left:455.0px;top:845.0px;width:25.0px;height:2.0px;background:#e0e0e0;"></div>
  <div class="a" style="left:457.0px;top:848.5px;width:21.0px;height:1.0px;background:#bbb;"></div>
  <div class="a" style="left:452.0px;top:852.5px;width:30.5px;height:9.5px;background:#262626;background-image:repeating-linear-gradient(90deg,rgba(255,255,255,0.18) 0 1px,transparent 1px 2.5px),repeating-linear-gradient(0deg,rgba(0,0,0,0.5) 0 1px,transparent 1px 2.2px)"></div>
  <div class="a" style="left:441.5px;top:834.0px;width:3.5px;height:18.0px;background:#fff;"></div>
  <div class="a" style="left:442.5px;top:835.0px;width:1.5px;height:16.0px;background:#222;"></div>
  <div class="a" style="left:412.3px;top:846.8px;width:21.0px;height:15.5px;background:#fbef86;box-shadow:0 0.5px 1px rgba(0,0,0,0.15)"></div>
  <div class="a" style="left:415.0px;top:850.5px;width:16.0px;height:9.5px;background:transparent;background-image:repeating-linear-gradient(0deg,rgba(90,80,30,0.3) 0 0.6px,transparent 0.6px 1.5px)"></div>
  <div class="a" style="left:419.0px;top:848.5px;width:8.0px;height:0.7px;background:#6a5a20;"></div>
  <div class="a" style="left:422.0px;top:843.0px;width:16.0px;height:0.5px;background:#c8c8c8;"></div>
  <div class="a" style="left:422.0px;top:843.0px;width:0.5px;height:4.0px;background:#c8c8c8;"></div>
  <svg class="a" style="left:490.0px;top:796.0px" width="11.0" height="11.0" viewBox="0 0 12 12"><g fill="#7020e2"><path d="M6 0.4 L8.4 2.8 L6 5.2 L3.6 2.8Z"/><path d="M6 6.8 L8.4 9.2 L6 11.6 L3.6 9.2Z"/><path d="M0.4 6 L2.8 3.6 L5.2 6 L2.8 8.4Z"/><path d="M6.8 6 L9.2 3.6 L11.6 6 L9.2 8.4Z"/></g></svg>
  <div class="a" style="left:505.0px;top:794.8px;font-size:12px;line-height:14.4px;color:#7020e2;white-space:nowrap;letter-spacing:-0.2px;-webkit-text-stroke:0.25px #7020e2;">I...</div>
  <div class="a" style="left:489.0px;top:810.0px;width:34.0px;height:26.0px;background:#c8c8c8;"></div>
  <div class="a" style="left:495.0px;top:811.8px;font-size:3.6px;line-height:4.3px;color:#f0f0f0;white-space:nowrap;font-weight:bold">ENJOY 10% OFF</div>
  <div class="a" style="left:495.0px;top:817.0px;width:22.0px;height:0.6px;background:#e4e4e4;"></div>
  <div class="a" style="left:493.0px;top:822.2px;font-size:6.3px;line-height:7.6px;color:#f6f6f6;white-space:nowrap;font-weight:bold">10% OFF</div>
  <div class="a" style="left:488.2px;top:843.0px;width:34.0px;height:22.8px;background:#f0f0f0;border:0.5px solid #ddd"></div>
  <div class="a" style="left:490.0px;top:845.0px;width:30.5px;height:9.0px;background:#262626;background-image:repeating-linear-gradient(90deg,rgba(255,255,255,0.18) 0 1px,transparent 1px 2.5px),repeating-linear-gradient(0deg,rgba(0,0,0,0.5) 0 1px,transparent 1px 2.2px)"></div>
  <div class="a" style="left:490.0px;top:855.5px;width:30.5px;height:9.0px;background:#262626;background-image:repeating-linear-gradient(90deg,rgba(255,255,255,0.18) 0 1px,transparent 1px 2.5px),repeating-linear-gradient(0deg,rgba(0,0,0,0.5) 0 1px,transparent 1px 2.2px)"></div>
  <svg class="a" style="left:489.0px;top:829.5px" width="10.5" height="10.5" viewBox="0 0 12 12"><g fill="#7020e2"><path d="M6 0.4 L8.4 2.8 L6 5.2 L3.6 2.8Z"/><path d="M6 6.8 L8.4 9.2 L6 11.6 L3.6 9.2Z"/><path d="M0.4 6 L2.8 3.6 L5.2 6 L2.8 8.4Z"/><path d="M6.8 6 L9.2 3.6 L11.6 6 L9.2 8.4Z"/></g></svg>
  <div class="a" style="left:504.0px;top:831.0px;width:1.5px;height:8.0px;background:#7020e2;"></div>
  <svg class="a" style="left:507.0px;top:836.0px" width="10" height="4"><rect x="0.2" y="1.1" width="1.8" height="1.8" fill="#7020e2"/><rect x="3.2" y="1.1" width="1.8" height="1.8" fill="#7020e2"/><rect x="6.2" y="1.1" width="1.8" height="1.8" fill="#7020e2"/></svg>
  <div class="a" style="left:549.2px;top:809.0px;width:0.7px;height:129.5px;background:#9a9a9a;"></div>
  <svg class="a" style="left:556.0px;top:795.5px" width="11.0" height="11.0" viewBox="0 0 12 12"><g fill="#7020e2"><path d="M6 0.4 L8.4 2.8 L6 5.2 L3.6 2.8Z"/><path d="M6 6.8 L8.4 9.2 L6 11.6 L3.6 9.2Z"/><path d="M0.4 6 L2.8 3.6 L5.2 6 L2.8 8.4Z"/><path d="M6.8 6 L9.2 3.6 L11.6 6 L9.2 8.4Z"/></g></svg>
  <div class="a" style="left:570.9px;top:794.3px;font-size:12px;line-height:14.4px;color:#7020e2;white-space:nowrap;letter-spacing:-0.2px;-webkit-text-stroke:0.25px #7020e2;">I...</div>
  <div class="a" style="left:556.3px;top:809.5px;width:38.6px;height:62.6px;background:#8e8f91;border:1px solid #dcd8ea"></div>
  <div class="a" style="left:556.0px;top:873.7px;width:39.3px;height:64.5px;background:#8e8f91;border:1.5px solid #4a4a4a"></div>
  <svg class="a" style="left:598.9px;top:795.5px" width="11.0" height="11.0" viewBox="0 0 12 12"><g fill="#7020e2"><path d="M6 0.4 L8.4 2.8 L6 5.2 L3.6 2.8Z"/><path d="M6 6.8 L8.4 9.2 L6 11.6 L3.6 9.2Z"/><path d="M0.4 6 L2.8 3.6 L5.2 6 L2.8 8.4Z"/><path d="M6.8 6 L9.2 3.6 L11.6 6 L9.2 8.4Z"/></g></svg>
  <div class="a" style="left:612.8px;top:794.3px;font-size:12px;line-height:14.4px;color:#7020e2;white-space:nowrap;letter-spacing:-0.2px;-webkit-text-stroke:0.25px #7020e2;">I...</div>
  <div class="a" style="left:598.2px;top:809.5px;width:33.6px;height:7.0px;background:#c8c8c8;"></div>
  <div class="a" style="left:598.2px;top:816.5px;width:33.6px;height:6.5px;background:#55585c;"></div>
  <div class="a" style="left:598.2px;top:829.8px;width:33.6px;height:15.9px;background:#c8c8c8;"></div>
  <div class="a" style="left:601.5px;top:834.5px;font-size:6.6px;line-height:7.9px;color:#fafafa;white-space:nowrap;font-weight:bold">10% OFF</div>
  <div class="a" style="left:598.2px;top:845.7px;width:33.6px;height:16.9px;background:#55585c;"></div>
  <div class="a" style="left:601.5px;top:850.5px;font-size:6.6px;line-height:7.9px;color:#fff;white-space:nowrap;font-weight:bold">10% OFF</div>
  <svg class="a" style="left:599.0px;top:816.5px" width="10.5" height="10.5" viewBox="0 0 12 12"><g fill="#7020e2"><path d="M6 0.4 L8.4 2.8 L6 5.2 L3.6 2.8Z"/><path d="M6 6.8 L8.4 9.2 L6 11.6 L3.6 9.2Z"/><path d="M0.4 6 L2.8 3.6 L5.2 6 L2.8 8.4Z"/><path d="M6.8 6 L9.2 3.6 L11.6 6 L9.2 8.4Z"/></g></svg>
  <svg class="a" style="left:613.0px;top:821.5px" width="10" height="4"><rect x="0.2" y="1.1" width="1.8" height="1.8" fill="#7020e2"/><rect x="3.2" y="1.1" width="1.8" height="1.8" fill="#7020e2"/><rect x="6.2" y="1.1" width="1.8" height="1.8" fill="#7020e2"/></svg>
  <div class="a" style="left:610.2px;top:862.6px;width:0.5px;height:59.6px;background:#c8c8c8;"></div>
  <div class="a" style="left:596.0px;top:921.7px;width:14.7px;height:0.5px;background:#c8c8c8;"></div>
  <div class="a" style="left:598.2px;top:872.8px;width:25.5px;height:25.3px;background:#fcf07a;box-shadow:0 0.5px 1px rgba(0,0,0,0.15)"></div>
  <div class="a" style="left:600.5px;top:875.5px;width:17.5px;height:1.3px;background:#8a7a30;"></div>
  <div class="a" style="left:600.5px;top:879.0px;width:20.5px;height:17.0px;background:transparent;background-image:repeating-linear-gradient(0deg,rgba(110,100,40,0.3) 0 0.6px,transparent 0.6px 2.2px)"></div>
  <svg class="a" style="left:635.9px;top:795.5px" width="11.0" height="11.0" viewBox="0 0 12 12"><g fill="#7020e2"><path d="M6 0.4 L8.4 2.8 L6 5.2 L3.6 2.8Z"/><path d="M6 6.8 L8.4 9.2 L6 11.6 L3.6 9.2Z"/><path d="M0.4 6 L2.8 3.6 L5.2 6 L2.8 8.4Z"/><path d="M6.8 6 L9.2 3.6 L11.6 6 L9.2 8.4Z"/></g></svg>
  <div class="a" style="left:650.5px;top:794.3px;font-size:12px;line-height:14.4px;color:#7020e2;white-space:nowrap;letter-spacing:-0.2px;-webkit-text-stroke:0.25px #7020e2;">I...</div>
  <div class="a" style="left:635.2px;top:809.5px;width:32.8px;height:17.2px;background:#505256;"></div>
  <div class="a" style="left:636.5px;top:810.5px;width:30.5px;height:6.7px;background:#e30f17;"></div>
  <div class="a" style="left:636.5px;top:819.0px;width:30.5px;height:7.0px;background:#e30f17;"></div>
  <svg class="a" style="left:671.7px;top:796.0px" width="11.0" height="11.0" viewBox="0 0 12 12"><g fill="#7020e2"><path d="M6 0.4 L8.4 2.8 L6 5.2 L3.6 2.8Z"/><path d="M6 6.8 L8.4 9.2 L6 11.6 L3.6 9.2Z"/><path d="M0.4 6 L2.8 3.6 L5.2 6 L2.8 8.4Z"/><path d="M6.8 6 L9.2 3.6 L11.6 6 L9.2 8.4Z"/></g></svg>
  <div class="a" style="left:685.6px;top:794.8px;font-size:12px;line-height:14.4px;color:#7020e2;white-space:nowrap;letter-spacing:-0.2px;-webkit-text-stroke:0.25px #7020e2;">I...</div>
  <div class="a" style="left:671.1px;top:810.5px;width:34.1px;height:18.5px;background:#fafafa;"></div>
  <div class="a" style="left:673.0px;top:811.8px;width:30.5px;height:6.4px;background:#262626;background-image:repeating-linear-gradient(90deg,rgba(255,255,255,0.18) 0 1px,transparent 1px 2.5px),repeating-linear-gradient(0deg,rgba(0,0,0,0.5) 0 1px,transparent 1px 2.2px)"></div>
  <div class="a" style="left:673.0px;top:820.2px;width:30.5px;height:7.3px;background:#262626;background-image:repeating-linear-gradient(90deg,rgba(255,255,255,0.18) 0 1px,transparent 1px 2.5px),repeating-linear-gradient(0deg,rgba(0,0,0,0.5) 0 1px,transparent 1px 2.2px)"></div>
  <div class="a" style="left:671.1px;top:829.8px;width:34.1px;height:20.0px;background:#3a3a3a;"></div>
  <div class="a" style="left:673.0px;top:831.5px;width:30.5px;height:8.0px;background:#2a2a2a;background-image:repeating-linear-gradient(90deg,rgba(255,255,255,0.18) 0 1px,transparent 1px 2.5px),repeating-linear-gradient(0deg,rgba(0,0,0,0.5) 0 1px,transparent 1px 2.2px)"></div>
  <div class="a" style="left:673.0px;top:841.0px;width:30.5px;height:7.5px;background:#2a2a2a;background-image:repeating-linear-gradient(90deg,rgba(255,255,255,0.18) 0 1px,transparent 1px 2.5px),repeating-linear-gradient(0deg,rgba(0,0,0,0.5) 0 1px,transparent 1px 2.2px)"></div>
  <div class="a" style="left:671.1px;top:850.0px;width:34.1px;height:17.5px;background:#fafafa;"></div>
  <div class="a" style="left:673.0px;top:851.5px;width:30.5px;height:7.0px;background:#262626;background-image:repeating-linear-gradient(90deg,rgba(255,255,255,0.18) 0 1px,transparent 1px 2.5px),repeating-linear-gradient(0deg,rgba(0,0,0,0.5) 0 1px,transparent 1px 2.2px)"></div>
  <div class="a" style="left:673.0px;top:860.0px;width:30.5px;height:6.5px;background:#262626;background-image:repeating-linear-gradient(90deg,rgba(255,255,255,0.18) 0 1px,transparent 1px 2.5px),repeating-linear-gradient(0deg,rgba(0,0,0,0.5) 0 1px,transparent 1px 2.2px)"></div>
  <div class="a" style="left:671.1px;top:869.1px;width:34.1px;height:19.3px;background:#3a3a3a;"></div>
  <div class="a" style="left:673.0px;top:871.0px;width:30.5px;height:7.5px;background:#2a2a2a;background-image:repeating-linear-gradient(90deg,rgba(255,255,255,0.18) 0 1px,transparent 1px 2.5px),repeating-linear-gradient(0deg,rgba(0,0,0,0.5) 0 1px,transparent 1px 2.2px)"></div>
  <div class="a" style="left:673.0px;top:880.0px;width:30.5px;height:7.0px;background:#2a2a2a;background-image:repeating-linear-gradient(90deg,rgba(255,255,255,0.18) 0 1px,transparent 1px 2.5px),repeating-linear-gradient(0deg,rgba(0,0,0,0.5) 0 1px,transparent 1px 2.2px)"></div>
  <svg class="a" style="left:708.9px;top:795.1px" width="11.0" height="11.0" viewBox="0 0 12 12"><g fill="#7020e2"><path d="M6 0.4 L8.4 2.8 L6 5.2 L3.6 2.8Z"/><path d="M6 6.8 L8.4 9.2 L6 11.6 L3.6 9.2Z"/><path d="M0.4 6 L2.8 3.6 L5.2 6 L2.8 8.4Z"/><path d="M6.8 6 L9.2 3.6 L11.6 6 L9.2 8.4Z"/></g></svg>
  <div class="a" style="left:723.3px;top:793.9px;font-size:12px;line-height:14.4px;color:#7020e2;white-space:nowrap;letter-spacing:-0.2px;-webkit-text-stroke:0.25px #7020e2;">IG Landing Page/Desktop BG</div>
  <div class="a" style="left:709.5px;top:810.0px;width:107.5px;height:230.0px;background:#ececec;border:0.5px solid #d9d5ea"></div>
  <div class="a" style="left:710.0px;top:810.6px;width:106.4px;height:75.4px;background:#8e8f91;"></div>
  <div class="a" style="left:710.0px;top:888.0px;width:52.7px;height:75.0px;background:#8e8f91;"></div>
  <svg class="a" style="left:762.7px;top:888.0px" width="53.7" height="75.0" viewBox="0 0 100 100" preserveAspectRatio="none"><rect width="100" height="100" fill="#e4d96c"/><ellipse cx="52" cy="88" rx="34" ry="2.5" fill="rgba(110,100,30,0.25)"/><rect x="25" y="15" width="30" height="72" fill="#e6d24c"/><rect x="25" y="15" width="30" height="2" fill="#ecdc60"/><path d="M43 21 L76 21 L73 80 L47 80 Z" fill="#f3f3f5"/><path d="M69 21 L76 21 L73 80 L68 80 Z" fill="#e6e6ea"/><rect x="49" y="80" width="22" height="7" fill="#eed03a"/><rect x="49" y="39.5" width="19" height="3.5" fill="#2a2a2a"/><rect x="55" y="36" width="8" height="1.5" fill="#e2c83a"/></svg>
  <svg class="a" style="left:710.0px;top:964.5px" width="52.7" height="74.9" viewBox="0 0 100 100" preserveAspectRatio="none"><rect width="100" height="100" fill="#e4d96c"/><ellipse cx="52" cy="88" rx="34" ry="2.5" fill="rgba(110,100,30,0.25)"/><rect x="25" y="15" width="30" height="72" fill="#e6d24c"/><rect x="25" y="15" width="30" height="2" fill="#ecdc60"/><path d="M43 21 L76 21 L73 80 L47 80 Z" fill="#f3f3f5"/><path d="M69 21 L76 21 L73 80 L68 80 Z" fill="#e6e6ea"/><rect x="49" y="80" width="22" height="7" fill="#eed03a"/><rect x="49" y="39.5" width="19" height="3.5" fill="#2a2a2a"/><rect x="55" y="36" width="8" height="1.5" fill="#e2c83a"/></svg>
  <div class="a" style="left:762.7px;top:964.5px;width:53.7px;height:74.9px;background:#8e8f91;"></div>
  <div class="a" style="left:817.5px;top:809.0px;width:109.5px;height:232.0px;background:#4d4f53;"></div>
  <div class="a" style="left:819.0px;top:810.5px;width:106.5px;height:75.0px;background:#8e8f91;"></div>
  <div class="a" style="left:819.0px;top:887.0px;width:52.8px;height:75.5px;background:#8e8f91;"></div>
  <svg class="a" style="left:871.8px;top:887.0px" width="53.7" height="75.5" viewBox="0 0 100 100" preserveAspectRatio="none"><rect width="100" height="100" fill="#e4d96c"/><ellipse cx="52" cy="88" rx="34" ry="2.5" fill="rgba(110,100,30,0.25)"/><rect x="25" y="15" width="30" height="72" fill="#e6d24c"/><rect x="25" y="15" width="30" height="2" fill="#ecdc60"/><path d="M43 21 L76 21 L73 80 L47 80 Z" fill="#f3f3f5"/><path d="M69 21 L76 21 L73 80 L68 80 Z" fill="#e6e6ea"/><rect x="49" y="80" width="22" height="7" fill="#eed03a"/><rect x="49" y="39.5" width="19" height="3.5" fill="#2a2a2a"/><rect x="55" y="36" width="8" height="1.5" fill="#e2c83a"/></svg>
  <svg class="a" style="left:819.0px;top:964.0px" width="52.8" height="75.5" viewBox="0 0 100 100" preserveAspectRatio="none"><rect width="100" height="100" fill="#e4d96c"/><ellipse cx="52" cy="88" rx="34" ry="2.5" fill="rgba(110,100,30,0.25)"/><rect x="25" y="15" width="30" height="72" fill="#e6d24c"/><rect x="25" y="15" width="30" height="2" fill="#ecdc60"/><path d="M43 21 L76 21 L73 80 L47 80 Z" fill="#f3f3f5"/><path d="M69 21 L76 21 L73 80 L68 80 Z" fill="#e6e6ea"/><rect x="49" y="80" width="22" height="7" fill="#eed03a"/><rect x="49" y="39.5" width="19" height="3.5" fill="#2a2a2a"/><rect x="55" y="36" width="8" height="1.5" fill="#e2c83a"/></svg>
  <div class="a" style="left:871.8px;top:964.0px;width:53.7px;height:75.5px;background:#8e8f91;"></div>
  <div class="a" style="left:1143.0px;top:807.5px;width:32.0px;height:3.5px;background:#ececec;border:0.5px solid #d4d4d4;border-radius:2px"></div>
  <div class="a" style="left:1152.0px;top:809.0px;width:11.0px;height:0.5px;background:#999;"></div>
  <div class="a" style="left:1110.0px;top:816.5px;width:100.0px;height:3.0px;background:#e9e9e9;border:0.5px solid #d8d8d8;border-radius:2px"></div>
  <div class="a" style="left:1152.0px;top:817.8px;width:11.0px;height:0.5px;background:#999;"></div>
  <div class="a" style="left:1142.5px;top:828.9px;width:33.5px;height:28.9px;background:#8e8f91;"></div>
  <!-- CANVAS END -->
  <div class="a" style="left:1621px;top:125px;width:242px;height:1018px;background:#fff;border-left:1px solid #e6e6e6"></div>
  <div class="tt" style="left:1637.5px;top:138.5px;font-size:11.3px;font-weight:bold;color:#1e1e1e">Comment</div>
  <div class="tt" style="left:1705px;top:138.5px;font-size:12px;color:#8c8c8c">Inspect</div>
  <div class="tt" style="left:1761px;top:138.5px;font-size:12px;color:#8c8c8c">Export</div>
  <div class="a" style="left:1622px;top:165.5px;width:241px;height:1px;background:#e6e6e6"></div>
  <svg class="a" style="left:1635px;top:178px" width="16" height="16"><circle cx="7" cy="7" r="4.6" fill="none" stroke="#333" stroke-width="1.1"/><path d="M10.3 10.3 L13.5 13.5" stroke="#333" stroke-width="1.1"/></svg>
  <div class="tt" style="left:1657.5px;top:178.7px;font-size:11.75px;color:#8c8c8c">Search</div>
  <svg class="a" style="left:1801px;top:177px" width="20" height="18"><circle cx="10" cy="9" r="7.5" fill="none" stroke="#1e1e1e" stroke-width="1.1"/><path d="M6 6.8 H14 M7.3 9.2 H12.7 M8.7 11.6 H11.3" stroke="#1e1e1e" stroke-width="1.1"/></svg>
  <svg class="a" style="left:1834px;top:176px" width="18" height="18"><path d="M4.5 2.5 V16 M13.5 2.5 V16" stroke="#1e1e1e" stroke-width="1.1"/><circle cx="4.5" cy="11.5" r="1.8" fill="#fff" stroke="#1e1e1e" stroke-width="1.1"/><circle cx="13.5" cy="6" r="1.8" fill="#fff" stroke="#1e1e1e" stroke-width="1.1"/></svg>
  <div class="a" style="left:1622px;top:204.5px;width:241px;height:1px;background:#e6e6e6"></div>
  <svg class="a" style="left:1636px;top:222px" width="22" height="20"><path d="M2.3 17.8 L4.2 13.8 A8 7.5 0 1 1 7.5 16.7 Z" fill="none" stroke="#1e1e1e" stroke-width="1.2" stroke-linejoin="round"/></svg>
  <div class="tt" style="left:1665.7px;top:223.5px;font-size:11.75px;color:#1e1e1e">Give feedback, ask a question, or</div>
  <div class="tt" style="left:1665.7px;top:239.8px;font-size:11.75px;color:#1e1e1e">just leave a note of appreciation.</div>
  <div class="tt" style="left:1665.7px;top:256.0px;font-size:11.75px;color:#1e1e1e">Click anywhere in the file to leave</div>
  <div class="tt" style="left:1665.7px;top:272.2px;font-size:11.75px;color:#1e1e1e">a comment.</div>
  <div class="a" style="left:1803px;top:1082.5px;width:36px;height:36px;border-radius:50%;background:#222"></div>
  <svg class="a" style="left:1803px;top:1082.5px" width="36" height="36"><path d="M14.3 15 A3.8 3.8 0 1 1 19.5 18.3 Q18 19.3 18 21.5 V22.5" fill="none" stroke="#fff" stroke-width="1.1"/><circle cx="18" cy="25.5" r="0.8" fill="#fff"/></svg>
</div>
<div id="wborder" class="a" style="left:57px;top:38px;width:1806px;height:1105px;border-radius:10px;box-shadow:inset 0 0 0 1px rgba(255,255,255,0.13);pointer-events:none"></div>
</body></html>
